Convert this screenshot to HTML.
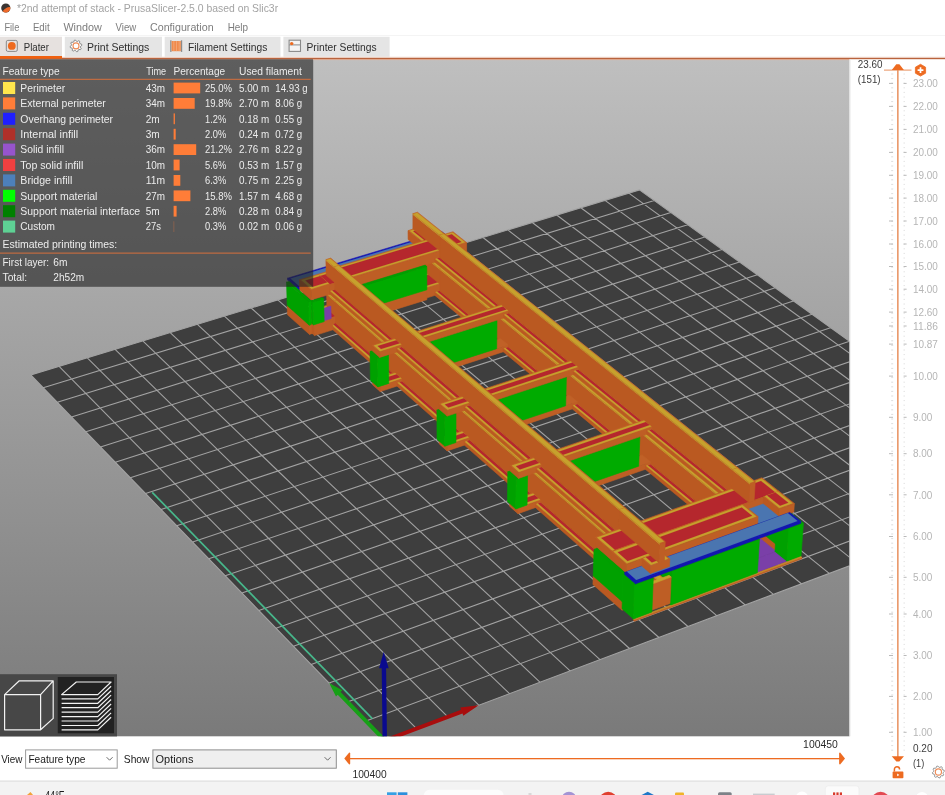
<!DOCTYPE html>
<html lang="en"><head><meta charset="utf-8"><title>PrusaSlicer</title>
<style>
html,body{margin:0;padding:0;background:#fff;}
body{width:945px;height:795px;overflow:hidden;position:relative;font-family:"Liberation Sans",sans-serif;}
#scene{position:absolute;left:0;top:0;width:945px;height:795px;display:block;font-family:"Liberation Sans",sans-serif;will-change:transform;-webkit-font-smoothing:antialiased;}
.t{position:absolute;white-space:nowrap;line-height:1;margin:0;padding:0;transform-origin:0 0;}
</style></head><body>
<svg id="scene" width="945" height="795" viewBox="0 0 945 795">
<defs><linearGradient id="bg" x1="0" y1="0" x2="0" y2="1"><stop offset="0" stop-color="#bfbfbf"/><stop offset="1" stop-color="#7a7a7a"/></linearGradient><clipPath id="cv"><rect x="0" y="59" width="849.5" height="677.3"/></clipPath></defs>
<rect x="0" y="59" width="849.5" height="677.3" fill="url(#bg)"/>
<g clip-path="url(#cv)">
<polygon points="384.8,740.6 1054.0,488.8 639.5,189.9 30.8,375.0" fill="#3e3e3e"/>
<path d="M384.8,740.6L30.8,375.0M416.5,728.7L59.1,366.4M447.8,716.9L87.3,357.8M478.8,705.2L115.1,349.3M509.5,693.7L142.8,340.9M539.9,682.2L170.2,332.6M570.1,670.9L197.4,324.3M600.0,659.6L224.4,316.1M629.5,648.5L251.2,308.0M658.9,637.5L277.8,299.9M687.9,626.5L304.2,291.9M716.7,615.7L330.3,283.9M745.2,605.0L356.3,276.0M773.4,594.4L382.0,268.2M801.4,583.8L407.5,260.4M829.2,573.4L432.9,252.7M856.7,563.0L458.0,245.1M883.9,552.8L483.0,237.5M910.9,542.6L507.8,229.9M937.7,532.6L532.3,222.5M964.2,522.6L556.7,215.0M990.5,512.7L580.9,207.7M1016.6,502.9L605.0,200.4M1042.4,493.2L628.8,193.1M384.8,740.6L1054.0,488.8M366.0,721.1L1032.2,473.1M347.4,701.9L1010.7,457.6M329.1,683.0L989.6,442.4M311.1,664.4L968.7,427.3M293.4,646.2L948.2,412.5M276.0,628.2L927.9,397.9M258.8,610.4L907.9,383.5M241.9,593.0L888.1,369.2M225.2,575.8L868.7,355.2M208.8,558.8L849.5,341.3M192.6,542.1L830.5,327.7M176.7,525.7L811.9,314.2M161.0,509.5L793.4,300.9M145.6,493.5L775.2,287.8M130.3,477.7L757.3,274.8M115.3,462.2L739.5,262.1M100.5,446.9L722.0,249.4M85.9,431.8L704.8,237.0M71.5,417.0L687.7,224.7M57.3,402.3L670.9,212.5M43.2,387.8L654.3,200.5M384.8,740.6L1054.0,488.8L639.5,189.9L30.8,375.0Z" fill="none" stroke="#a2a2a2" stroke-width="1.1"/>
<line x1="152.2" y1="492.3" x2="372.3" y2="718.7" stroke="#47b78b" stroke-width="1.7"/>
<polygon points="386.3,739.2 340.6,692.0 342.3,690.3 329.1,683.0 336.0,696.4 337.7,694.8 383.4,741.9" fill="#16a016"/>
<polygon points="385.5,742.4 462.5,713.5 463.3,715.7 478.8,705.2 460.2,707.5 461.1,709.7 384.1,738.7" fill="#a80d0d"/>
<polygon points="387.0,740.5 386.1,668.2 388.7,668.2 383.7,651.7 379.1,668.3 381.7,668.3 382.6,740.6" fill="#0a0a8e"/>
<polygon points="421.5,283.3 408.3,272.4 408.3,263.6 421.4,274.5" fill="#ba5921" stroke="#ba5921" stroke-width="0.6" stroke-linejoin="round"/>
<polygon points="421.5,283.3 438.4,278.1 438.4,269.2 421.4,274.5" fill="#be5e25" stroke="#be5e25" stroke-width="0.6" stroke-linejoin="round"/>
<polygon points="421.4,274.5 438.4,269.2 425.2,258.5 408.3,263.6" fill="#c06127" stroke="#c06127" stroke-width="0.6" stroke-linejoin="round"/>
<polygon points="422.3,274.2 437.5,269.5 424.8,259.2 409.7,263.8" fill="#c6a12d" stroke="#c6a12d" stroke-width="0.15" stroke-linejoin="round"/>
<polygon points="424.6,273.5 435.2,270.2 423.9,261.1 413.4,264.3" fill="#b5272d" stroke="#b5272d" stroke-width="0.15" stroke-linejoin="round"/>
<polygon points="340.4,324.8 327.3,313.3 327.1,303.4 340.2,314.8" fill="#ba5921" stroke="#ba5921" stroke-width="0.6" stroke-linejoin="round"/>
<polygon points="340.4,324.8 466.5,285.6 466.5,275.7 340.2,314.8" fill="#be5e25" stroke="#be5e25" stroke-width="0.6" stroke-linejoin="round"/>
<polygon points="340.2,314.8 466.5,275.7 452.9,264.8 327.1,303.4" fill="#c06127" stroke="#c06127" stroke-width="0.6" stroke-linejoin="round"/>
<polygon points="339.7,314.3 465.0,275.6 452.6,265.5 327.7,303.9" fill="#c6a12d" stroke="#c6a12d" stroke-width="0.15" stroke-linejoin="round"/>
<polygon points="338.3,313.1 461.3,275.1 451.7,267.4 329.0,305.1" fill="#b5272d" stroke="#b5272d" stroke-width="0.15" stroke-linejoin="round"/>
<polygon points="439.8,284.0 413.1,262.2 413.1,247.6 439.8,269.4" fill="#ba5921" stroke="#ba5921" stroke-width="0.6" stroke-linejoin="round"/>
<polygon points="439.8,284.0 444.4,282.6 444.4,267.9 439.8,269.4" fill="#be5e25" stroke="#be5e25" stroke-width="0.6" stroke-linejoin="round"/>
<polygon points="439.8,269.4 413.1,247.6 413.0,246.8 439.8,268.6" fill="#c6a12d" stroke="#c6a12d" stroke-width="0.6" stroke-linejoin="round"/>
<polygon points="439.8,269.4 444.4,267.9 444.4,267.1 439.8,268.6" fill="#be5e25" stroke="#be5e25" stroke-width="0.6" stroke-linejoin="round"/>
<polygon points="439.8,268.6 444.4,267.1 417.7,245.4 413.0,246.8" fill="#c06127" stroke="#c06127" stroke-width="0.6" stroke-linejoin="round"/>
<polygon points="439.8,268.6 443.8,267.3 417.4,246.0 413.4,247.2" fill="#c6a12d" stroke="#c6a12d" stroke-width="0.15" stroke-linejoin="round"/>
<polygon points="505.2,342.4 444.4,292.4 444.4,289.3 505.2,339.2" fill="#ba5921" stroke="#ba5921" stroke-width="0.6" stroke-linejoin="round"/>
<polygon points="505.2,342.4 510.1,340.8 510.2,337.6 505.2,339.2" fill="#be5e25" stroke="#be5e25" stroke-width="0.6" stroke-linejoin="round"/>
<polygon points="505.2,339.2 510.2,337.6 449.3,287.8 444.4,289.3" fill="#c06127" stroke="#c06127" stroke-width="0.6" stroke-linejoin="round"/>
<polygon points="505.2,339.2 509.6,337.8 448.8,288.0 444.4,289.3" fill="#c6a12d" stroke="#c6a12d" stroke-width="0.15" stroke-linejoin="round"/>
<polygon points="505.2,339.2 507.8,338.4 447.0,288.5 444.4,289.3" fill="#b5272d" stroke="#b5272d" stroke-width="0.15" stroke-linejoin="round"/>
<polygon points="298.3,289.4 287.6,280.1 287.6,278.2 298.2,287.5" fill="#1414b4" stroke="#1414b4" stroke-width="0.6" stroke-linejoin="round"/>
<polygon points="298.3,289.4 453.0,242.4 453.0,240.6 298.2,287.5" fill="#1414b4" stroke="#1414b4" stroke-width="0.6" stroke-linejoin="round"/>
<polygon points="298.2,287.5 453.0,240.6 441.9,231.7 287.6,278.2" fill="#1414b4" stroke="#1414b4" stroke-width="0.6" stroke-linejoin="round"/>
<polygon points="300.1,286.9 451.2,241.1 441.2,233.1 290.5,278.6" fill="#4a75b0" stroke="#4a75b0" stroke-width="0.15" stroke-linejoin="round"/>
<polygon points="421.3,250.2 408.1,239.5 408.0,230.6 421.3,241.2" fill="#ba5921" stroke="#ba5921" stroke-width="0.6" stroke-linejoin="round"/>
<polygon points="421.3,250.2 438.3,245.0 438.3,236.1 421.3,241.2" fill="#be5e25" stroke="#be5e25" stroke-width="0.6" stroke-linejoin="round"/>
<polygon points="421.3,241.2 438.3,236.1 425.0,225.5 408.0,230.6" fill="#c06127" stroke="#c06127" stroke-width="0.6" stroke-linejoin="round"/>
<polygon points="422.2,241.0 437.4,236.4 424.7,226.2 409.5,230.7" fill="#c6a12d" stroke="#c6a12d" stroke-width="0.15" stroke-linejoin="round"/>
<polygon points="424.5,240.3 435.1,237.1 423.8,228.0 413.2,231.2" fill="#b5272d" stroke="#b5272d" stroke-width="0.15" stroke-linejoin="round"/>
<polygon points="349.7,323.7 348.1,322.4 347.9,312.4 349.5,313.7" fill="#ba5921" stroke="#ba5921" stroke-width="0.6" stroke-linejoin="round"/>
<polygon points="349.7,323.7 426.9,299.7 426.9,289.8 349.5,313.7" fill="#be5e25" stroke="#be5e25" stroke-width="0.6" stroke-linejoin="round"/>
<polygon points="339.8,291.3 326.6,280.0 326.4,269.9 339.6,281.2" fill="#ba5921" stroke="#ba5921" stroke-width="0.6" stroke-linejoin="round"/>
<polygon points="339.8,291.3 466.6,252.5 466.6,242.5 339.6,281.2" fill="#be5e25" stroke="#be5e25" stroke-width="0.6" stroke-linejoin="round"/>
<polygon points="339.6,281.2 466.6,242.5 453.0,231.7 326.4,269.9" fill="#c06127" stroke="#c06127" stroke-width="0.6" stroke-linejoin="round"/>
<polygon points="339.0,280.7 465.2,242.3 452.6,232.4 326.9,270.4" fill="#c6a12d" stroke="#c6a12d" stroke-width="0.15" stroke-linejoin="round"/>
<polygon points="337.6,279.5 461.4,241.9 451.8,234.2 328.3,271.5" fill="#b5272d" stroke="#b5272d" stroke-width="0.15" stroke-linejoin="round"/>
<polygon points="439.7,250.7 412.9,229.1 412.9,214.4 439.7,235.9" fill="#ba5921" stroke="#ba5921" stroke-width="0.6" stroke-linejoin="round"/>
<polygon points="439.7,250.7 444.4,249.3 444.4,234.5 439.7,235.9" fill="#be5e25" stroke="#be5e25" stroke-width="0.6" stroke-linejoin="round"/>
<polygon points="439.7,235.9 412.9,214.4 412.8,213.6 439.7,235.1" fill="#c6a12d" stroke="#c6a12d" stroke-width="0.6" stroke-linejoin="round"/>
<polygon points="439.7,235.9 444.4,234.5 444.4,233.7 439.7,235.1" fill="#be5e25" stroke="#be5e25" stroke-width="0.6" stroke-linejoin="round"/>
<polygon points="439.7,235.1 444.4,233.7 417.5,212.2 412.8,213.6" fill="#c06127" stroke="#c06127" stroke-width="0.6" stroke-linejoin="round"/>
<polygon points="439.7,235.1 443.8,233.9 417.2,212.7 413.2,213.9" fill="#c6a12d" stroke="#c6a12d" stroke-width="0.15" stroke-linejoin="round"/>
<polygon points="349.5,313.7 347.9,312.4 347.5,288.9 349.1,290.2" fill="#00a100" stroke="#00a100" stroke-width="0.6" stroke-linejoin="round"/>
<polygon points="349.5,313.7 426.9,289.8 426.8,266.5 349.1,290.2" fill="#00ab00" stroke="#00ab00" stroke-width="0.6" stroke-linejoin="round"/>
<polygon points="349.1,290.2 426.8,266.5 425.2,265.1 347.5,288.9" fill="#00a000" stroke="#00a000" stroke-width="0.6" stroke-linejoin="round"/>
<polygon points="505.5,308.7 444.4,259.3 444.4,256.1 505.6,305.5" fill="#ba5921" stroke="#ba5921" stroke-width="0.6" stroke-linejoin="round"/>
<polygon points="505.5,308.7 510.5,307.1 510.6,303.9 505.6,305.5" fill="#be5e25" stroke="#be5e25" stroke-width="0.6" stroke-linejoin="round"/>
<polygon points="505.6,305.5 510.6,303.9 449.3,254.6 444.4,256.1" fill="#c06127" stroke="#c06127" stroke-width="0.6" stroke-linejoin="round"/>
<polygon points="505.6,305.5 510.1,304.1 448.8,254.8 444.4,256.1" fill="#c6a12d" stroke="#c6a12d" stroke-width="0.15" stroke-linejoin="round"/>
<polygon points="505.6,305.5 508.2,304.6 447.0,255.3 444.4,256.1" fill="#b5272d" stroke="#b5272d" stroke-width="0.15" stroke-linejoin="round"/>
<polygon points="512.9,348.7 505.2,342.4 505.2,337.1 513.0,343.4" fill="#ba5921" stroke="#ba5921" stroke-width="0.6" stroke-linejoin="round"/>
<polygon points="512.9,348.7 525.7,344.6 525.8,339.3 513.0,343.4" fill="#be5e25" stroke="#be5e25" stroke-width="0.6" stroke-linejoin="round"/>
<polygon points="513.0,343.4 525.8,339.3 518.0,333.0 505.2,337.1" fill="#c06127" stroke="#c06127" stroke-width="0.6" stroke-linejoin="round"/>
<polygon points="512.4,342.9 524.3,339.1 517.7,333.8 505.8,337.6" fill="#c6a12d" stroke="#c6a12d" stroke-width="0.15" stroke-linejoin="round"/>
<polygon points="510.8,341.7 520.4,338.6 516.9,335.7 507.3,338.8" fill="#b5272d" stroke="#b5272d" stroke-width="0.15" stroke-linejoin="round"/>
<polygon points="330.6,327.8 319.1,317.7 318.8,307.7 330.4,317.8" fill="#ba5921" stroke="#ba5921" stroke-width="0.6" stroke-linejoin="round"/>
<polygon points="330.6,327.8 340.4,324.8 340.2,314.8 330.4,317.8" fill="#be5e25" stroke="#be5e25" stroke-width="0.6" stroke-linejoin="round"/>
<polygon points="330.4,317.8 340.2,314.8 328.7,304.7 318.8,307.7" fill="#c06127" stroke="#c06127" stroke-width="0.6" stroke-linejoin="round"/>
<polygon points="330.4,317.8 340.2,314.8 329.2,305.2 319.4,308.2" fill="#c6a12d" stroke="#c6a12d" stroke-width="0.15" stroke-linejoin="round"/>
<polygon points="330.4,317.8 340.2,314.8 330.6,306.4 320.8,309.4" fill="#b5272d" stroke="#b5272d" stroke-width="0.15" stroke-linejoin="round"/>
<polygon points="335.4,316.3 327.0,308.9 326.6,294.1 335.1,301.5" fill="#ba5921" stroke="#ba5921" stroke-width="0.6" stroke-linejoin="round"/>
<polygon points="335.4,316.3 340.2,314.8 339.9,300.0 335.1,301.5" fill="#be5e25" stroke="#be5e25" stroke-width="0.6" stroke-linejoin="round"/>
<polygon points="312.2,333.5 300.7,323.4 300.4,313.4 311.9,323.5" fill="#ba5921" stroke="#ba5921" stroke-width="0.6" stroke-linejoin="round"/>
<polygon points="312.2,333.5 330.6,327.8 330.4,317.8 311.9,323.5" fill="#be5e25" stroke="#be5e25" stroke-width="0.6" stroke-linejoin="round"/>
<polygon points="311.9,323.5 330.4,317.8 318.8,307.7 300.4,313.4" fill="#c06127" stroke="#c06127" stroke-width="0.6" stroke-linejoin="round"/>
<polygon points="312.4,322.7 329.8,317.3 319.4,308.3 302.1,313.6" fill="#c6a12d" stroke="#c6a12d" stroke-width="0.15" stroke-linejoin="round"/>
<polygon points="313.5,320.5 328.2,315.9 321.0,309.6 306.3,314.1" fill="#b5272d" stroke="#b5272d" stroke-width="0.15" stroke-linejoin="round"/>
<polygon points="309.5,334.4 287.5,314.8 287.2,305.6 309.3,325.2" fill="#ba5921" stroke="#ba5921" stroke-width="0.6" stroke-linejoin="round"/>
<polygon points="309.5,334.4 312.2,333.5 311.9,324.3 309.3,325.2" fill="#be5e25" stroke="#be5e25" stroke-width="0.6" stroke-linejoin="round"/>
<polygon points="335.1,301.5 326.6,294.1 326.6,293.3 335.1,300.7" fill="#c6a12d" stroke="#c6a12d" stroke-width="0.6" stroke-linejoin="round"/>
<polygon points="335.1,301.5 339.9,300.0 339.9,299.2 335.1,300.7" fill="#be5e25" stroke="#be5e25" stroke-width="0.6" stroke-linejoin="round"/>
<polygon points="335.1,300.7 339.9,299.2 331.4,291.9 326.6,293.3" fill="#c06127" stroke="#c06127" stroke-width="0.6" stroke-linejoin="round"/>
<polygon points="335.1,300.7 339.3,299.4 331.1,292.4 327.0,293.7" fill="#c6a12d" stroke="#c6a12d" stroke-width="0.15" stroke-linejoin="round"/>
<polygon points="299.8,290.7 298.3,289.4 298.2,287.5 299.8,288.8" fill="#1414b4" stroke="#1414b4" stroke-width="0.6" stroke-linejoin="round"/>
<polygon points="299.8,288.8 328.1,280.2 326.6,278.9 298.2,287.5" fill="#1414b4" stroke="#1414b4" stroke-width="0.6" stroke-linejoin="round"/>
<polygon points="301.6,288.3 328.1,280.2 326.6,278.9 300.1,286.9" fill="#4a75b0" stroke="#4a75b0" stroke-width="0.15" stroke-linejoin="round"/>
<polygon points="513.3,315.0 505.5,308.7 505.6,303.3 513.4,309.6" fill="#ba5921" stroke="#ba5921" stroke-width="0.6" stroke-linejoin="round"/>
<polygon points="513.3,315.0 526.2,310.9 526.3,305.5 513.4,309.6" fill="#be5e25" stroke="#be5e25" stroke-width="0.6" stroke-linejoin="round"/>
<polygon points="513.4,309.6 526.3,305.5 518.5,299.3 505.6,303.3" fill="#c06127" stroke="#c06127" stroke-width="0.6" stroke-linejoin="round"/>
<polygon points="512.8,309.1 524.8,305.3 518.1,300.0 506.2,303.8" fill="#c6a12d" stroke="#c6a12d" stroke-width="0.15" stroke-linejoin="round"/>
<polygon points="511.3,307.9 520.9,304.9 517.3,302.0 507.7,305.0" fill="#b5272d" stroke="#b5272d" stroke-width="0.15" stroke-linejoin="round"/>
<polygon points="309.3,325.2 287.2,305.6 286.5,282.2 308.7,301.6" fill="#00a100" stroke="#00a100" stroke-width="0.6" stroke-linejoin="round"/>
<polygon points="309.3,325.2 311.9,324.3 311.3,300.8 308.7,301.6" fill="#00ab00" stroke="#00ab00" stroke-width="0.6" stroke-linejoin="round"/>
<polygon points="308.7,301.6 311.3,300.8 289.2,281.4 286.5,282.2" fill="#00a000" stroke="#00a000" stroke-width="0.6" stroke-linejoin="round"/>
<polygon points="329.9,294.3 318.3,284.3 318.0,274.2 329.6,284.2" fill="#ba5921" stroke="#ba5921" stroke-width="0.6" stroke-linejoin="round"/>
<polygon points="329.9,294.3 339.8,291.3 339.6,281.2 329.6,284.2" fill="#be5e25" stroke="#be5e25" stroke-width="0.6" stroke-linejoin="round"/>
<polygon points="329.6,284.2 339.6,281.2 327.9,271.2 318.0,274.2" fill="#c06127" stroke="#c06127" stroke-width="0.6" stroke-linejoin="round"/>
<polygon points="329.6,284.2 339.6,281.2 328.5,271.7 318.6,274.7" fill="#c6a12d" stroke="#c6a12d" stroke-width="0.15" stroke-linejoin="round"/>
<polygon points="329.6,284.2 339.6,281.2 329.9,272.9 320.0,275.9" fill="#b5272d" stroke="#b5272d" stroke-width="0.15" stroke-linejoin="round"/>
<polygon points="334.7,282.6 326.2,275.3 325.9,260.4 334.4,267.7" fill="#ba5921" stroke="#ba5921" stroke-width="0.6" stroke-linejoin="round"/>
<polygon points="334.7,282.6 339.6,281.2 339.3,266.2 334.4,267.7" fill="#be5e25" stroke="#be5e25" stroke-width="0.6" stroke-linejoin="round"/>
<polygon points="311.3,300.0 299.8,289.9 299.5,279.8 311.1,289.8" fill="#ba5921" stroke="#ba5921" stroke-width="0.6" stroke-linejoin="round"/>
<polygon points="311.3,300.0 329.9,294.3 329.6,284.2 311.1,289.8" fill="#be5e25" stroke="#be5e25" stroke-width="0.6" stroke-linejoin="round"/>
<polygon points="311.1,289.8 329.6,284.2 318.0,274.2 299.5,279.8" fill="#c06127" stroke="#c06127" stroke-width="0.6" stroke-linejoin="round"/>
<polygon points="311.5,289.0 329.0,283.6 318.6,274.7 301.2,280.0" fill="#c6a12d" stroke="#c6a12d" stroke-width="0.15" stroke-linejoin="round"/>
<polygon points="312.7,286.8 327.5,282.3 320.2,276.1 305.4,280.5" fill="#b5272d" stroke="#b5272d" stroke-width="0.15" stroke-linejoin="round"/>
<polygon points="399.5,376.3 340.4,324.8 340.4,321.6 399.5,373.1" fill="#ba5921" stroke="#ba5921" stroke-width="0.6" stroke-linejoin="round"/>
<polygon points="399.5,376.3 404.6,374.7 404.6,371.5 399.5,373.1" fill="#be5e25" stroke="#be5e25" stroke-width="0.6" stroke-linejoin="round"/>
<polygon points="399.5,373.1 404.6,371.5 345.4,320.0 340.4,321.6" fill="#c06127" stroke="#c06127" stroke-width="0.6" stroke-linejoin="round"/>
<polygon points="399.5,373.1 404.1,371.7 344.9,320.2 340.4,321.6" fill="#c6a12d" stroke="#c6a12d" stroke-width="0.15" stroke-linejoin="round"/>
<polygon points="399.5,373.1 402.2,372.3 343.0,320.8 340.4,321.6" fill="#b5272d" stroke="#b5272d" stroke-width="0.15" stroke-linejoin="round"/>
<polygon points="574.0,398.9 512.9,348.7 512.9,345.5 574.1,395.7" fill="#ba5921" stroke="#ba5921" stroke-width="0.6" stroke-linejoin="round"/>
<polygon points="574.0,398.9 579.0,397.2 579.1,394.0 574.1,395.7" fill="#be5e25" stroke="#be5e25" stroke-width="0.6" stroke-linejoin="round"/>
<polygon points="574.1,395.7 579.1,394.0 517.9,343.9 512.9,345.5" fill="#c06127" stroke="#c06127" stroke-width="0.6" stroke-linejoin="round"/>
<polygon points="574.1,395.7 578.6,394.2 517.4,344.1 512.9,345.5" fill="#c6a12d" stroke="#c6a12d" stroke-width="0.15" stroke-linejoin="round"/>
<polygon points="574.1,395.7 576.7,394.8 515.5,344.7 512.9,345.5" fill="#b5272d" stroke="#b5272d" stroke-width="0.15" stroke-linejoin="round"/>
<polygon points="334.4,267.7 325.9,260.4 325.9,259.6 334.4,266.9" fill="#c6a12d" stroke="#c6a12d" stroke-width="0.6" stroke-linejoin="round"/>
<polygon points="334.4,267.7 339.3,266.2 339.3,265.4 334.4,266.9" fill="#be5e25" stroke="#be5e25" stroke-width="0.6" stroke-linejoin="round"/>
<polygon points="334.4,266.9 339.3,265.4 330.7,258.1 325.9,259.6" fill="#c06127" stroke="#c06127" stroke-width="0.6" stroke-linejoin="round"/>
<polygon points="334.4,266.9 338.6,265.6 330.4,258.7 326.2,259.9" fill="#c6a12d" stroke="#c6a12d" stroke-width="0.15" stroke-linejoin="round"/>
<polygon points="399.2,342.3 339.8,291.3 339.7,288.1 399.2,339.1" fill="#ba5921" stroke="#ba5921" stroke-width="0.6" stroke-linejoin="round"/>
<polygon points="399.2,342.3 404.4,340.7 404.4,337.4 399.2,339.1" fill="#be5e25" stroke="#be5e25" stroke-width="0.6" stroke-linejoin="round"/>
<polygon points="399.2,339.1 404.4,337.4 344.8,286.5 339.7,288.1" fill="#c06127" stroke="#c06127" stroke-width="0.6" stroke-linejoin="round"/>
<polygon points="399.2,339.1 403.8,337.6 344.2,286.7 339.7,288.1" fill="#c6a12d" stroke="#c6a12d" stroke-width="0.15" stroke-linejoin="round"/>
<polygon points="399.2,339.1 401.9,338.2 342.4,287.3 339.7,288.1" fill="#b5272d" stroke="#b5272d" stroke-width="0.15" stroke-linejoin="round"/>
<polygon points="574.8,364.7 513.3,315.0 513.4,311.7 574.9,361.4" fill="#ba5921" stroke="#ba5921" stroke-width="0.6" stroke-linejoin="round"/>
<polygon points="574.8,364.7 579.9,363.0 580.0,359.7 574.9,361.4" fill="#be5e25" stroke="#be5e25" stroke-width="0.6" stroke-linejoin="round"/>
<polygon points="574.9,361.4 580.0,359.7 518.4,310.2 513.4,311.7" fill="#c06127" stroke="#c06127" stroke-width="0.6" stroke-linejoin="round"/>
<polygon points="574.9,361.4 579.5,359.9 517.8,310.3 513.4,311.7" fill="#c6a12d" stroke="#c6a12d" stroke-width="0.15" stroke-linejoin="round"/>
<polygon points="574.9,361.4 577.6,360.5 516.0,310.9 513.4,311.7" fill="#b5272d" stroke="#b5272d" stroke-width="0.15" stroke-linejoin="round"/>
<polygon points="582.1,405.6 574.0,398.9 574.1,393.5 582.3,400.2" fill="#ba5921" stroke="#ba5921" stroke-width="0.6" stroke-linejoin="round"/>
<polygon points="582.1,405.6 595.1,401.3 595.3,395.9 582.3,400.2" fill="#be5e25" stroke="#be5e25" stroke-width="0.6" stroke-linejoin="round"/>
<polygon points="582.3,400.2 595.3,395.9 587.1,389.2 574.1,393.5" fill="#c06127" stroke="#c06127" stroke-width="0.6" stroke-linejoin="round"/>
<polygon points="581.7,399.7 593.7,395.7 586.8,390.0 574.7,394.1" fill="#c6a12d" stroke="#c6a12d" stroke-width="0.15" stroke-linejoin="round"/>
<polygon points="580.1,398.4 589.8,395.2 586.0,392.1 576.3,395.4" fill="#b5272d" stroke="#b5272d" stroke-width="0.15" stroke-linejoin="round"/>
<polygon points="583.0,371.3 574.8,364.7 575.0,359.2 583.2,365.9" fill="#ba5921" stroke="#ba5921" stroke-width="0.6" stroke-linejoin="round"/>
<polygon points="583.0,371.3 596.1,367.0 596.3,361.5 583.2,365.9" fill="#be5e25" stroke="#be5e25" stroke-width="0.6" stroke-linejoin="round"/>
<polygon points="583.2,365.9 596.3,361.5 588.0,354.9 575.0,359.2" fill="#c06127" stroke="#c06127" stroke-width="0.6" stroke-linejoin="round"/>
<polygon points="582.6,365.3 594.7,361.3 587.7,355.7 575.6,359.7" fill="#c6a12d" stroke="#c6a12d" stroke-width="0.15" stroke-linejoin="round"/>
<polygon points="580.9,364.0 590.7,360.8 586.9,357.8 577.2,361.0" fill="#b5272d" stroke="#b5272d" stroke-width="0.15" stroke-linejoin="round"/>
<polygon points="646.7,458.7 582.1,405.6 582.2,402.4 646.8,455.4" fill="#ba5921" stroke="#ba5921" stroke-width="0.6" stroke-linejoin="round"/>
<polygon points="646.7,458.7 651.8,456.9 652.0,453.6 646.8,455.4" fill="#be5e25" stroke="#be5e25" stroke-width="0.6" stroke-linejoin="round"/>
<polygon points="646.8,455.4 652.0,453.6 587.3,400.7 582.2,402.4" fill="#c06127" stroke="#c06127" stroke-width="0.6" stroke-linejoin="round"/>
<polygon points="646.8,455.4 651.4,453.8 586.7,400.9 582.2,402.4" fill="#c6a12d" stroke="#c6a12d" stroke-width="0.15" stroke-linejoin="round"/>
<polygon points="646.8,455.4 649.5,454.5 584.9,401.5 582.2,402.4" fill="#b5272d" stroke="#b5272d" stroke-width="0.15" stroke-linejoin="round"/>
<polygon points="648.1,423.9 583.0,371.3 583.1,368.0 648.2,420.5" fill="#ba5921" stroke="#ba5921" stroke-width="0.6" stroke-linejoin="round"/>
<polygon points="648.1,423.9 653.3,422.1 653.4,418.8 648.2,420.5" fill="#be5e25" stroke="#be5e25" stroke-width="0.6" stroke-linejoin="round"/>
<polygon points="648.2,420.5 653.4,418.8 588.2,366.4 583.1,368.0" fill="#c06127" stroke="#c06127" stroke-width="0.6" stroke-linejoin="round"/>
<polygon points="648.2,420.5 652.8,419.0 587.7,366.5 583.1,368.0" fill="#c6a12d" stroke="#c6a12d" stroke-width="0.15" stroke-linejoin="round"/>
<polygon points="648.2,420.5 650.9,419.6 585.8,367.2 583.1,368.0" fill="#b5272d" stroke="#b5272d" stroke-width="0.15" stroke-linejoin="round"/>
<polygon points="655.4,465.8 646.7,458.7 646.9,453.2 655.6,460.3" fill="#ba5921" stroke="#ba5921" stroke-width="0.6" stroke-linejoin="round"/>
<polygon points="655.4,465.8 668.6,461.2 668.8,455.7 655.6,460.3" fill="#be5e25" stroke="#be5e25" stroke-width="0.6" stroke-linejoin="round"/>
<polygon points="655.6,460.3 668.8,455.7 660.2,448.7 646.9,453.2" fill="#c06127" stroke="#c06127" stroke-width="0.6" stroke-linejoin="round"/>
<polygon points="654.9,459.8 667.2,455.5 659.9,449.5 647.6,453.8" fill="#c6a12d" stroke="#c6a12d" stroke-width="0.15" stroke-linejoin="round"/>
<polygon points="653.2,458.4 663.1,455.0 659.1,451.7 649.3,455.2" fill="#b5272d" stroke="#b5272d" stroke-width="0.15" stroke-linejoin="round"/>
<polygon points="656.8,430.9 648.1,423.9 648.3,418.3 657.0,425.4" fill="#ba5921" stroke="#ba5921" stroke-width="0.6" stroke-linejoin="round"/>
<polygon points="656.8,430.9 670.1,426.3 670.3,420.8 657.0,425.4" fill="#be5e25" stroke="#be5e25" stroke-width="0.6" stroke-linejoin="round"/>
<polygon points="657.0,425.4 670.3,420.8 661.6,413.8 648.3,418.3" fill="#c06127" stroke="#c06127" stroke-width="0.6" stroke-linejoin="round"/>
<polygon points="656.4,424.8 668.7,420.6 661.3,414.7 649.0,418.9" fill="#c6a12d" stroke="#c6a12d" stroke-width="0.15" stroke-linejoin="round"/>
<polygon points="654.6,423.4 664.6,420.0 660.6,416.9 650.7,420.2" fill="#b5272d" stroke="#b5272d" stroke-width="0.15" stroke-linejoin="round"/>
<polygon points="734.3,530.7 655.4,465.8 655.5,462.5 734.5,527.3" fill="#ba5921" stroke="#ba5921" stroke-width="0.6" stroke-linejoin="round"/>
<polygon points="734.3,530.7 739.5,528.8 739.7,525.4 734.5,527.3" fill="#be5e25" stroke="#be5e25" stroke-width="0.6" stroke-linejoin="round"/>
<polygon points="734.5,527.3 739.7,525.4 660.6,460.7 655.5,462.5" fill="#c06127" stroke="#c06127" stroke-width="0.6" stroke-linejoin="round"/>
<polygon points="734.5,527.3 739.2,525.6 660.1,460.9 655.5,462.5" fill="#c6a12d" stroke="#c6a12d" stroke-width="0.15" stroke-linejoin="round"/>
<polygon points="734.5,527.3 737.2,526.3 658.2,461.6 655.5,462.5" fill="#b5272d" stroke="#b5272d" stroke-width="0.15" stroke-linejoin="round"/>
<polygon points="729.3,532.5 439.8,293.9 439.8,290.8 729.5,529.1" fill="#ba5921" stroke="#ba5921" stroke-width="0.6" stroke-linejoin="round"/>
<polygon points="729.3,532.5 734.3,530.7 734.5,527.3 729.5,529.1" fill="#be5e25" stroke="#be5e25" stroke-width="0.6" stroke-linejoin="round"/>
<polygon points="495.5,345.5 434.9,295.4 434.9,292.3 495.5,342.3" fill="#ba5921" stroke="#ba5921" stroke-width="0.6" stroke-linejoin="round"/>
<polygon points="495.5,345.5 500.5,343.9 500.5,340.7 495.5,342.3" fill="#be5e25" stroke="#be5e25" stroke-width="0.6" stroke-linejoin="round"/>
<polygon points="495.5,342.3 500.5,340.7 439.8,290.8 434.9,292.3" fill="#c06127" stroke="#c06127" stroke-width="0.6" stroke-linejoin="round"/>
<polygon points="496.0,342.1 500.5,340.7 439.8,290.8 435.4,292.1" fill="#c6a12d" stroke="#c6a12d" stroke-width="0.15" stroke-linejoin="round"/>
<polygon points="497.9,341.5 500.5,340.7 439.8,290.8 437.2,291.6" fill="#b5272d" stroke="#b5272d" stroke-width="0.15" stroke-linejoin="round"/>
<polygon points="729.5,529.1 439.8,290.8 439.8,269.4 730.8,506.2" fill="#ba5921" stroke="#ba5921" stroke-width="0.6" stroke-linejoin="round"/>
<polygon points="729.5,529.1 734.5,527.3 735.8,504.4 730.8,506.2" fill="#be5e25" stroke="#be5e25" stroke-width="0.6" stroke-linejoin="round"/>
<polygon points="407.0,382.9 399.5,376.3 399.5,371.0 407.0,377.5" fill="#ba5921" stroke="#ba5921" stroke-width="0.6" stroke-linejoin="round"/>
<polygon points="407.0,382.9 508.2,350.2 508.2,344.9 407.0,377.5" fill="#be5e25" stroke="#be5e25" stroke-width="0.6" stroke-linejoin="round"/>
<polygon points="407.0,377.5 508.2,344.9 500.5,338.6 399.5,371.0" fill="#c06127" stroke="#c06127" stroke-width="0.6" stroke-linejoin="round"/>
<polygon points="564.1,402.2 503.2,351.8 503.2,348.7 564.2,399.0" fill="#ba5921" stroke="#ba5921" stroke-width="0.6" stroke-linejoin="round"/>
<polygon points="564.1,402.2 569.2,400.5 569.3,397.3 564.2,399.0" fill="#be5e25" stroke="#be5e25" stroke-width="0.6" stroke-linejoin="round"/>
<polygon points="564.2,399.0 569.3,397.3 508.2,347.1 503.2,348.7" fill="#c06127" stroke="#c06127" stroke-width="0.6" stroke-linejoin="round"/>
<polygon points="564.7,398.8 569.3,397.3 508.2,347.1 503.8,348.5" fill="#c6a12d" stroke="#c6a12d" stroke-width="0.15" stroke-linejoin="round"/>
<polygon points="566.6,398.2 569.3,397.3 508.2,347.1 505.6,347.9" fill="#b5272d" stroke="#b5272d" stroke-width="0.15" stroke-linejoin="round"/>
<polygon points="414.8,375.0 407.3,368.5 407.1,339.8 414.7,346.3" fill="#00a100" stroke="#00a100" stroke-width="0.6" stroke-linejoin="round"/>
<polygon points="414.8,375.0 496.7,348.7 497.0,320.2 414.7,346.3" fill="#00ab00" stroke="#00ab00" stroke-width="0.6" stroke-linejoin="round"/>
<polygon points="414.7,346.3 497.0,320.2 489.2,313.8 407.1,339.8" fill="#00a000" stroke="#00a000" stroke-width="0.6" stroke-linejoin="round"/>
<polygon points="730.8,506.2 439.8,269.4 439.8,268.6 730.9,505.4" fill="#c6a12d" stroke="#c6a12d" stroke-width="0.6" stroke-linejoin="round"/>
<polygon points="730.8,506.2 735.8,504.4 735.8,503.6 730.9,505.4" fill="#be5e25" stroke="#be5e25" stroke-width="0.6" stroke-linejoin="round"/>
<polygon points="730.9,505.4 735.8,503.6 444.4,267.1 439.8,268.6" fill="#c06127" stroke="#c06127" stroke-width="0.6" stroke-linejoin="round"/>
<polygon points="730.9,505.4 735.1,503.8 443.8,267.3 439.8,268.6" fill="#c6a12d" stroke="#c6a12d" stroke-width="0.15" stroke-linejoin="round"/>
<polygon points="466.5,434.8 407.0,382.9 407.0,379.7 466.5,431.5" fill="#ba5921" stroke="#ba5921" stroke-width="0.6" stroke-linejoin="round"/>
<polygon points="466.5,434.8 471.7,433.0 471.7,429.8 466.5,431.5" fill="#be5e25" stroke="#be5e25" stroke-width="0.6" stroke-linejoin="round"/>
<polygon points="466.5,431.5 471.7,429.8 412.1,378.0 407.0,379.7" fill="#c06127" stroke="#c06127" stroke-width="0.6" stroke-linejoin="round"/>
<polygon points="466.5,431.5 471.2,430.0 411.6,378.2 407.0,379.7" fill="#c6a12d" stroke="#c6a12d" stroke-width="0.15" stroke-linejoin="round"/>
<polygon points="466.5,431.5 469.3,430.6 409.7,378.8 407.0,379.7" fill="#b5272d" stroke="#b5272d" stroke-width="0.15" stroke-linejoin="round"/>
<polygon points="474.5,441.7 466.5,434.8 466.5,429.4 474.5,436.3" fill="#ba5921" stroke="#ba5921" stroke-width="0.6" stroke-linejoin="round"/>
<polygon points="474.5,441.7 577.3,407.2 577.5,401.8 474.5,436.3" fill="#be5e25" stroke="#be5e25" stroke-width="0.6" stroke-linejoin="round"/>
<polygon points="474.5,436.3 577.5,401.8 569.3,395.1 466.5,429.4" fill="#c06127" stroke="#c06127" stroke-width="0.6" stroke-linejoin="round"/>
<polygon points="636.7,462.2 572.3,408.9 572.4,405.7 636.8,458.9" fill="#ba5921" stroke="#ba5921" stroke-width="0.6" stroke-linejoin="round"/>
<polygon points="636.7,462.2 641.9,460.4 642.0,457.1 636.8,458.9" fill="#be5e25" stroke="#be5e25" stroke-width="0.6" stroke-linejoin="round"/>
<polygon points="636.8,458.9 642.0,457.1 577.4,404.0 572.4,405.7" fill="#c06127" stroke="#c06127" stroke-width="0.6" stroke-linejoin="round"/>
<polygon points="637.4,458.7 642.0,457.1 577.4,404.0 572.9,405.5" fill="#c6a12d" stroke="#c6a12d" stroke-width="0.15" stroke-linejoin="round"/>
<polygon points="639.3,458.0 642.0,457.1 577.4,404.0 574.8,404.9" fill="#b5272d" stroke="#b5272d" stroke-width="0.15" stroke-linejoin="round"/>
<polygon points="482.5,433.6 474.5,426.7 474.7,397.6 482.7,404.4" fill="#00a100" stroke="#00a100" stroke-width="0.6" stroke-linejoin="round"/>
<polygon points="482.5,433.6 565.7,405.8 566.4,376.8 482.7,404.4" fill="#00ab00" stroke="#00ab00" stroke-width="0.6" stroke-linejoin="round"/>
<polygon points="482.7,404.4 566.4,376.8 558.2,370.1 474.7,397.6" fill="#00a000" stroke="#00a000" stroke-width="0.6" stroke-linejoin="round"/>
<polygon points="537.4,496.6 474.5,441.7 474.5,438.5 537.5,493.3" fill="#ba5921" stroke="#ba5921" stroke-width="0.6" stroke-linejoin="round"/>
<polygon points="537.4,496.6 542.7,494.8 542.8,491.5 537.5,493.3" fill="#be5e25" stroke="#be5e25" stroke-width="0.6" stroke-linejoin="round"/>
<polygon points="537.5,493.3 542.8,491.5 479.7,436.7 474.5,438.5" fill="#c06127" stroke="#c06127" stroke-width="0.6" stroke-linejoin="round"/>
<polygon points="537.5,493.3 542.2,491.7 479.2,436.9 474.5,438.5" fill="#c6a12d" stroke="#c6a12d" stroke-width="0.15" stroke-linejoin="round"/>
<polygon points="537.5,493.3 540.2,492.4 477.2,437.5 474.5,438.5" fill="#b5272d" stroke="#b5272d" stroke-width="0.15" stroke-linejoin="round"/>
<polygon points="545.8,504.0 537.4,496.6 537.5,491.1 545.9,498.5" fill="#ba5921" stroke="#ba5921" stroke-width="0.6" stroke-linejoin="round"/>
<polygon points="545.8,504.0 650.5,467.5 650.7,462.0 545.9,498.5" fill="#be5e25" stroke="#be5e25" stroke-width="0.6" stroke-linejoin="round"/>
<polygon points="545.9,498.5 650.7,462.0 642.1,454.9 537.5,491.1" fill="#c06127" stroke="#c06127" stroke-width="0.6" stroke-linejoin="round"/>
<polygon points="724.1,534.4 645.3,469.3 645.5,466.0 724.3,531.0" fill="#ba5921" stroke="#ba5921" stroke-width="0.6" stroke-linejoin="round"/>
<polygon points="724.1,534.4 729.3,532.5 729.5,529.1 724.3,531.0" fill="#be5e25" stroke="#be5e25" stroke-width="0.6" stroke-linejoin="round"/>
<polygon points="724.3,531.0 729.5,529.1 650.6,464.2 645.5,466.0" fill="#c06127" stroke="#c06127" stroke-width="0.6" stroke-linejoin="round"/>
<polygon points="724.8,530.8 729.5,529.1 650.6,464.2 646.0,465.8" fill="#c6a12d" stroke="#c6a12d" stroke-width="0.15" stroke-linejoin="round"/>
<polygon points="726.8,530.1 729.5,529.1 650.6,464.2 647.9,465.2" fill="#b5272d" stroke="#b5272d" stroke-width="0.15" stroke-linejoin="round"/>
<polygon points="554.0,495.6 545.6,488.3 546.2,458.7 554.7,465.9" fill="#00a100" stroke="#00a100" stroke-width="0.6" stroke-linejoin="round"/>
<polygon points="554.0,495.6 638.7,466.2 639.9,436.7 554.7,465.9" fill="#00ab00" stroke="#00ab00" stroke-width="0.6" stroke-linejoin="round"/>
<polygon points="554.7,465.9 639.9,436.7 631.2,429.6 546.2,458.7" fill="#00a000" stroke="#00a000" stroke-width="0.6" stroke-linejoin="round"/>
<polygon points="736.3,495.2 656.8,430.9 656.9,427.6 736.5,491.8" fill="#ba5921" stroke="#ba5921" stroke-width="0.6" stroke-linejoin="round"/>
<polygon points="736.3,495.2 741.6,493.3 741.8,489.9 736.5,491.8" fill="#be5e25" stroke="#be5e25" stroke-width="0.6" stroke-linejoin="round"/>
<polygon points="736.5,491.8 741.8,489.9 662.1,425.8 656.9,427.6" fill="#c06127" stroke="#c06127" stroke-width="0.6" stroke-linejoin="round"/>
<polygon points="736.5,491.8 741.2,490.1 661.6,426.0 656.9,427.6" fill="#c6a12d" stroke="#c6a12d" stroke-width="0.15" stroke-linejoin="round"/>
<polygon points="736.5,491.8 739.3,490.8 659.6,426.6 656.9,427.6" fill="#b5272d" stroke="#b5272d" stroke-width="0.15" stroke-linejoin="round"/>
<polygon points="731.3,496.9 439.8,260.7 439.8,257.5 731.5,493.6" fill="#ba5921" stroke="#ba5921" stroke-width="0.6" stroke-linejoin="round"/>
<polygon points="731.3,496.9 736.3,495.2 736.5,491.8 731.5,493.6" fill="#be5e25" stroke="#be5e25" stroke-width="0.6" stroke-linejoin="round"/>
<polygon points="495.8,311.8 434.8,262.2 434.8,259.0 495.8,308.5" fill="#ba5921" stroke="#ba5921" stroke-width="0.6" stroke-linejoin="round"/>
<polygon points="495.8,311.8 500.8,310.2 500.8,307.0 495.8,308.5" fill="#be5e25" stroke="#be5e25" stroke-width="0.6" stroke-linejoin="round"/>
<polygon points="495.8,308.5 500.8,307.0 439.8,257.5 434.8,259.0" fill="#c06127" stroke="#c06127" stroke-width="0.6" stroke-linejoin="round"/>
<polygon points="496.4,308.4 500.8,307.0 439.8,257.5 435.3,258.9" fill="#c6a12d" stroke="#c6a12d" stroke-width="0.15" stroke-linejoin="round"/>
<polygon points="498.2,307.8 500.8,307.0 439.8,257.5 437.2,258.3" fill="#b5272d" stroke="#b5272d" stroke-width="0.15" stroke-linejoin="round"/>
<polygon points="731.5,493.6 439.8,257.5 439.7,235.9 732.8,470.3" fill="#ba5921" stroke="#ba5921" stroke-width="0.6" stroke-linejoin="round"/>
<polygon points="731.5,493.6 736.5,491.8 737.8,468.6 732.8,470.3" fill="#be5e25" stroke="#be5e25" stroke-width="0.6" stroke-linejoin="round"/>
<polygon points="406.8,348.8 399.2,342.3 399.2,336.9 406.7,343.4" fill="#ba5921" stroke="#ba5921" stroke-width="0.6" stroke-linejoin="round"/>
<polygon points="406.8,348.8 508.6,316.5 508.6,311.1 406.7,343.4" fill="#be5e25" stroke="#be5e25" stroke-width="0.6" stroke-linejoin="round"/>
<polygon points="406.7,343.4 508.6,311.1 500.9,304.8 399.2,336.9" fill="#c06127" stroke="#c06127" stroke-width="0.6" stroke-linejoin="round"/>
<polygon points="406.2,342.9 508.1,310.6 501.5,305.3 399.7,337.4" fill="#c6a12d" stroke="#c6a12d" stroke-width="0.15" stroke-linejoin="round"/>
<polygon points="404.7,341.6 506.5,309.4 503.0,306.5 401.2,338.7" fill="#b5272d" stroke="#b5272d" stroke-width="0.15" stroke-linejoin="round"/>
<polygon points="564.9,367.9 503.6,318.1 503.6,314.8 565.0,364.7" fill="#ba5921" stroke="#ba5921" stroke-width="0.6" stroke-linejoin="round"/>
<polygon points="564.9,367.9 570.0,366.2 570.1,363.0 565.0,364.7" fill="#be5e25" stroke="#be5e25" stroke-width="0.6" stroke-linejoin="round"/>
<polygon points="565.0,364.7 570.1,363.0 508.6,313.3 503.6,314.8" fill="#c06127" stroke="#c06127" stroke-width="0.6" stroke-linejoin="round"/>
<polygon points="565.5,364.5 570.1,363.0 508.6,313.3 504.1,314.7" fill="#c6a12d" stroke="#c6a12d" stroke-width="0.15" stroke-linejoin="round"/>
<polygon points="567.4,363.9 570.1,363.0 508.6,313.3 506.0,314.1" fill="#b5272d" stroke="#b5272d" stroke-width="0.15" stroke-linejoin="round"/>
<polygon points="732.8,470.3 439.7,235.9 439.7,235.1 732.9,469.5" fill="#c6a12d" stroke="#c6a12d" stroke-width="0.6" stroke-linejoin="round"/>
<polygon points="732.8,470.3 737.8,468.6 737.9,467.7 732.9,469.5" fill="#be5e25" stroke="#be5e25" stroke-width="0.6" stroke-linejoin="round"/>
<polygon points="732.9,469.5 737.9,467.7 444.4,233.7 439.7,235.1" fill="#c06127" stroke="#c06127" stroke-width="0.6" stroke-linejoin="round"/>
<polygon points="732.9,469.5 737.2,468.0 443.8,233.9 439.7,235.1" fill="#c6a12d" stroke="#c6a12d" stroke-width="0.15" stroke-linejoin="round"/>
<polygon points="466.7,400.2 406.8,348.8 406.8,345.6 466.7,396.9" fill="#ba5921" stroke="#ba5921" stroke-width="0.6" stroke-linejoin="round"/>
<polygon points="466.7,400.2 471.9,398.5 471.9,395.2 466.7,396.9" fill="#be5e25" stroke="#be5e25" stroke-width="0.6" stroke-linejoin="round"/>
<polygon points="466.7,396.9 471.9,395.2 411.9,343.9 406.8,345.6" fill="#c06127" stroke="#c06127" stroke-width="0.6" stroke-linejoin="round"/>
<polygon points="466.7,396.9 471.4,395.4 411.4,344.1 406.8,345.6" fill="#c6a12d" stroke="#c6a12d" stroke-width="0.15" stroke-linejoin="round"/>
<polygon points="466.7,396.9 469.4,396.0 409.5,344.7 406.8,345.6" fill="#b5272d" stroke="#b5272d" stroke-width="0.15" stroke-linejoin="round"/>
<polygon points="474.7,407.1 466.7,400.2 466.7,394.7 474.7,401.6" fill="#ba5921" stroke="#ba5921" stroke-width="0.6" stroke-linejoin="round"/>
<polygon points="474.7,407.1 578.2,372.9 578.4,367.4 474.7,401.6" fill="#be5e25" stroke="#be5e25" stroke-width="0.6" stroke-linejoin="round"/>
<polygon points="474.7,401.6 578.4,367.4 570.1,360.8 466.7,394.7" fill="#c06127" stroke="#c06127" stroke-width="0.6" stroke-linejoin="round"/>
<polygon points="474.1,401.0 577.7,366.9 570.8,361.3 467.3,395.2" fill="#c6a12d" stroke="#c6a12d" stroke-width="0.15" stroke-linejoin="round"/>
<polygon points="472.5,399.7 576.1,365.6 572.4,362.6 468.8,396.6" fill="#b5272d" stroke="#b5272d" stroke-width="0.15" stroke-linejoin="round"/>
<polygon points="638.0,427.3 573.1,374.6 573.2,371.3 638.1,424.0" fill="#ba5921" stroke="#ba5921" stroke-width="0.6" stroke-linejoin="round"/>
<polygon points="638.0,427.3 643.2,425.5 643.3,422.2 638.1,424.0" fill="#be5e25" stroke="#be5e25" stroke-width="0.6" stroke-linejoin="round"/>
<polygon points="638.1,424.0 643.3,422.2 578.3,369.6 573.2,371.3" fill="#c06127" stroke="#c06127" stroke-width="0.6" stroke-linejoin="round"/>
<polygon points="638.7,423.8 643.3,422.2 578.3,369.6 573.7,371.1" fill="#c6a12d" stroke="#c6a12d" stroke-width="0.15" stroke-linejoin="round"/>
<polygon points="640.6,423.1 643.3,422.2 578.3,369.6 575.6,370.5" fill="#b5272d" stroke="#b5272d" stroke-width="0.15" stroke-linejoin="round"/>
<polygon points="538.0,461.5 474.7,407.1 474.7,403.8 538.1,458.1" fill="#ba5921" stroke="#ba5921" stroke-width="0.6" stroke-linejoin="round"/>
<polygon points="538.0,461.5 543.4,459.6 543.4,456.3 538.1,458.1" fill="#be5e25" stroke="#be5e25" stroke-width="0.6" stroke-linejoin="round"/>
<polygon points="538.1,458.1 543.4,456.3 479.9,402.0 474.7,403.8" fill="#c06127" stroke="#c06127" stroke-width="0.6" stroke-linejoin="round"/>
<polygon points="538.1,458.1 542.9,456.5 479.4,402.2 474.7,403.8" fill="#c6a12d" stroke="#c6a12d" stroke-width="0.15" stroke-linejoin="round"/>
<polygon points="538.1,458.1 540.9,457.2 477.4,402.8 474.7,403.8" fill="#b5272d" stroke="#b5272d" stroke-width="0.15" stroke-linejoin="round"/>
<polygon points="546.5,468.7 538.0,461.5 538.1,455.9 546.6,463.2" fill="#ba5921" stroke="#ba5921" stroke-width="0.6" stroke-linejoin="round"/>
<polygon points="546.5,468.7 651.9,432.6 652.1,427.0 546.6,463.2" fill="#be5e25" stroke="#be5e25" stroke-width="0.6" stroke-linejoin="round"/>
<polygon points="546.6,463.2 652.1,427.0 643.4,420.0 538.1,455.9" fill="#c06127" stroke="#c06127" stroke-width="0.6" stroke-linejoin="round"/>
<polygon points="546.0,462.6 651.4,426.5 644.1,420.5 538.8,456.4" fill="#c6a12d" stroke="#c6a12d" stroke-width="0.15" stroke-linejoin="round"/>
<polygon points="544.3,461.2 649.7,425.1 645.8,421.9 540.4,457.9" fill="#b5272d" stroke="#b5272d" stroke-width="0.15" stroke-linejoin="round"/>
<polygon points="726.1,498.8 646.7,434.4 646.8,431.0 726.2,495.5" fill="#ba5921" stroke="#ba5921" stroke-width="0.6" stroke-linejoin="round"/>
<polygon points="726.1,498.8 731.3,496.9 731.5,493.6 726.2,495.5" fill="#be5e25" stroke="#be5e25" stroke-width="0.6" stroke-linejoin="round"/>
<polygon points="726.2,495.5 731.5,493.6 652.0,429.3 646.8,431.0" fill="#c06127" stroke="#c06127" stroke-width="0.6" stroke-linejoin="round"/>
<polygon points="726.8,495.3 731.5,493.6 652.0,429.3 647.4,430.8" fill="#c6a12d" stroke="#c6a12d" stroke-width="0.15" stroke-linejoin="round"/>
<polygon points="728.7,494.6 731.5,493.6 652.0,429.3 649.3,430.2" fill="#b5272d" stroke="#b5272d" stroke-width="0.15" stroke-linejoin="round"/>
<polygon points="622.8,571.2 545.8,504.0 545.9,500.7 622.9,567.8" fill="#ba5921" stroke="#ba5921" stroke-width="0.6" stroke-linejoin="round"/>
<polygon points="622.8,571.2 628.2,569.2 628.3,565.9 622.9,567.8" fill="#be5e25" stroke="#be5e25" stroke-width="0.6" stroke-linejoin="round"/>
<polygon points="622.9,567.8 628.3,565.9 551.2,498.8 545.9,500.7" fill="#c06127" stroke="#c06127" stroke-width="0.6" stroke-linejoin="round"/>
<polygon points="622.9,567.8 627.8,566.1 550.6,499.0 545.9,500.7" fill="#c6a12d" stroke="#c6a12d" stroke-width="0.15" stroke-linejoin="round"/>
<polygon points="622.9,567.8 625.8,566.8 548.7,499.7 545.9,500.7" fill="#b5272d" stroke="#b5272d" stroke-width="0.15" stroke-linejoin="round"/>
<polygon points="617.7,573.1 335.7,326.2 335.6,323.1 617.8,569.7" fill="#ba5921" stroke="#ba5921" stroke-width="0.6" stroke-linejoin="round"/>
<polygon points="617.7,573.1 622.8,571.2 622.9,567.8 617.8,569.7" fill="#be5e25" stroke="#be5e25" stroke-width="0.6" stroke-linejoin="round"/>
<polygon points="389.5,379.5 330.6,327.8 330.5,324.7 389.5,376.3" fill="#ba5921" stroke="#ba5921" stroke-width="0.6" stroke-linejoin="round"/>
<polygon points="389.5,379.5 394.7,377.9 394.6,374.7 389.5,376.3" fill="#be5e25" stroke="#be5e25" stroke-width="0.6" stroke-linejoin="round"/>
<polygon points="389.5,376.3 394.6,374.7 335.6,323.1 330.5,324.7" fill="#c06127" stroke="#c06127" stroke-width="0.6" stroke-linejoin="round"/>
<polygon points="390.0,376.2 394.6,374.7 335.6,323.1 331.1,324.5" fill="#c6a12d" stroke="#c6a12d" stroke-width="0.15" stroke-linejoin="round"/>
<polygon points="391.9,375.6 394.6,374.7 335.6,323.1 332.9,323.9" fill="#b5272d" stroke="#b5272d" stroke-width="0.15" stroke-linejoin="round"/>
<polygon points="314.5,335.6 312.2,333.5 311.9,323.5 314.2,325.6" fill="#ba5921" stroke="#ba5921" stroke-width="0.6" stroke-linejoin="round"/>
<polygon points="314.5,335.6 332.9,329.8 332.7,319.9 314.2,325.6" fill="#be5e25" stroke="#be5e25" stroke-width="0.6" stroke-linejoin="round"/>
<polygon points="323.4,320.9 331.2,318.5 330.9,306.1 323.1,308.5" fill="#7a3fa8" stroke="#7a3fa8" stroke-width="0.6" stroke-linejoin="round"/>
<polygon points="313.5,324.9 311.9,323.5 311.3,300.8 312.9,302.1" fill="#00a100" stroke="#00a100" stroke-width="0.6" stroke-linejoin="round"/>
<polygon points="313.5,324.9 324.2,321.6 323.7,298.8 312.9,302.1" fill="#00ab00" stroke="#00ab00" stroke-width="0.6" stroke-linejoin="round"/>
<polygon points="312.9,302.1 323.7,298.8 322.1,297.5 311.3,300.8" fill="#00a000" stroke="#00a000" stroke-width="0.6" stroke-linejoin="round"/>
<polygon points="617.8,569.7 335.6,323.1 335.1,301.5 618.6,546.6" fill="#ba5921" stroke="#ba5921" stroke-width="0.6" stroke-linejoin="round"/>
<polygon points="617.8,569.7 622.9,567.8 623.8,544.7 618.6,546.6" fill="#be5e25" stroke="#be5e25" stroke-width="0.6" stroke-linejoin="round"/>
<polygon points="380.2,391.6 372.7,384.9 372.6,379.6 380.1,386.2" fill="#ba5921" stroke="#ba5921" stroke-width="0.6" stroke-linejoin="round"/>
<polygon points="380.2,391.6 402.2,384.4 402.1,379.1 380.1,386.2" fill="#be5e25" stroke="#be5e25" stroke-width="0.6" stroke-linejoin="round"/>
<polygon points="380.1,386.2 402.1,379.1 394.6,372.6 372.6,379.6" fill="#c06127" stroke="#c06127" stroke-width="0.6" stroke-linejoin="round"/>
<polygon points="380.5,385.4 401.5,378.6 395.2,373.0 374.1,379.8" fill="#c6a12d" stroke="#c6a12d" stroke-width="0.15" stroke-linejoin="round"/>
<polygon points="381.5,383.3 400.1,377.3 396.6,374.3 378.1,380.3" fill="#b5272d" stroke="#b5272d" stroke-width="0.15" stroke-linejoin="round"/>
<polygon points="377.9,386.9 370.4,380.3 370.0,351.5 377.5,358.1" fill="#00a100" stroke="#00a100" stroke-width="0.6" stroke-linejoin="round"/>
<polygon points="377.9,386.9 388.8,383.4 388.5,354.6 377.5,358.1" fill="#00ab00" stroke="#00ab00" stroke-width="0.6" stroke-linejoin="round"/>
<polygon points="377.5,358.1 388.5,354.6 381.0,348.1 370.0,351.5" fill="#00a000" stroke="#00a000" stroke-width="0.6" stroke-linejoin="round"/>
<polygon points="456.3,438.2 397.0,386.1 397.0,382.9 456.3,434.9" fill="#ba5921" stroke="#ba5921" stroke-width="0.6" stroke-linejoin="round"/>
<polygon points="456.3,438.2 461.6,436.4 461.6,433.2 456.3,434.9" fill="#be5e25" stroke="#be5e25" stroke-width="0.6" stroke-linejoin="round"/>
<polygon points="456.3,434.9 461.6,433.2 402.1,381.2 397.0,382.9" fill="#c06127" stroke="#c06127" stroke-width="0.6" stroke-linejoin="round"/>
<polygon points="456.9,434.7 461.6,433.2 402.1,381.2 397.5,382.7" fill="#c6a12d" stroke="#c6a12d" stroke-width="0.15" stroke-linejoin="round"/>
<polygon points="458.8,434.1 461.6,433.2 402.1,381.2 399.4,382.1" fill="#b5272d" stroke="#b5272d" stroke-width="0.15" stroke-linejoin="round"/>
<polygon points="447.1,450.9 439.2,443.9 439.2,438.5 447.1,445.4" fill="#ba5921" stroke="#ba5921" stroke-width="0.6" stroke-linejoin="round"/>
<polygon points="447.1,450.9 469.5,443.4 469.5,437.9 447.1,445.4" fill="#be5e25" stroke="#be5e25" stroke-width="0.6" stroke-linejoin="round"/>
<polygon points="447.1,445.4 469.5,437.9 461.6,431.0 439.2,438.5" fill="#c06127" stroke="#c06127" stroke-width="0.6" stroke-linejoin="round"/>
<polygon points="447.5,444.6 468.9,437.4 462.2,431.5 440.8,438.7" fill="#c6a12d" stroke="#c6a12d" stroke-width="0.15" stroke-linejoin="round"/>
<polygon points="448.4,442.4 467.4,436.1 463.7,432.9 444.8,439.2" fill="#b5272d" stroke="#b5272d" stroke-width="0.15" stroke-linejoin="round"/>
<polygon points="618.6,546.6 335.1,301.5 335.1,300.7 618.6,545.7" fill="#c6a12d" stroke="#c6a12d" stroke-width="0.6" stroke-linejoin="round"/>
<polygon points="618.6,546.6 623.8,544.7 623.8,543.9 618.6,545.7" fill="#be5e25" stroke="#be5e25" stroke-width="0.6" stroke-linejoin="round"/>
<polygon points="618.6,545.7 623.8,543.9 339.9,299.2 335.1,300.7" fill="#c06127" stroke="#c06127" stroke-width="0.6" stroke-linejoin="round"/>
<polygon points="618.6,545.7 623.1,544.1 339.3,299.4 335.1,300.7" fill="#c6a12d" stroke="#c6a12d" stroke-width="0.15" stroke-linejoin="round"/>
<polygon points="444.9,446.2 437.0,439.2 436.9,410.0 444.9,416.9" fill="#00a100" stroke="#00a100" stroke-width="0.6" stroke-linejoin="round"/>
<polygon points="444.9,446.2 456.0,442.5 456.0,413.2 444.9,416.9" fill="#00ab00" stroke="#00ab00" stroke-width="0.6" stroke-linejoin="round"/>
<polygon points="444.9,416.9 456.0,413.2 448.1,406.3 436.9,410.0" fill="#00a000" stroke="#00a000" stroke-width="0.6" stroke-linejoin="round"/>
<polygon points="527.0,500.2 464.3,445.1 464.3,441.9 527.1,496.9" fill="#ba5921" stroke="#ba5921" stroke-width="0.6" stroke-linejoin="round"/>
<polygon points="527.0,500.2 532.4,498.4 532.4,495.1 527.1,496.9" fill="#be5e25" stroke="#be5e25" stroke-width="0.6" stroke-linejoin="round"/>
<polygon points="527.1,496.9 532.4,495.1 469.5,440.1 464.3,441.9" fill="#c06127" stroke="#c06127" stroke-width="0.6" stroke-linejoin="round"/>
<polygon points="527.7,496.7 532.4,495.1 469.5,440.1 464.8,441.7" fill="#c6a12d" stroke="#c6a12d" stroke-width="0.15" stroke-linejoin="round"/>
<polygon points="529.6,496.1 532.4,495.1 469.5,440.1 466.8,441.0" fill="#b5272d" stroke="#b5272d" stroke-width="0.15" stroke-linejoin="round"/>
<polygon points="518.0,513.7 509.6,506.3 509.7,500.8 518.0,508.2" fill="#ba5921" stroke="#ba5921" stroke-width="0.6" stroke-linejoin="round"/>
<polygon points="518.0,513.7 540.8,505.7 540.9,500.2 518.0,508.2" fill="#be5e25" stroke="#be5e25" stroke-width="0.6" stroke-linejoin="round"/>
<polygon points="518.0,508.2 540.9,500.2 532.5,492.9 509.7,500.8" fill="#c06127" stroke="#c06127" stroke-width="0.6" stroke-linejoin="round"/>
<polygon points="518.4,507.3 540.2,499.7 533.1,493.4 511.3,501.0" fill="#c6a12d" stroke="#c6a12d" stroke-width="0.15" stroke-linejoin="round"/>
<polygon points="519.3,504.9 538.6,498.2 534.7,494.9 515.5,501.5" fill="#b5272d" stroke="#b5272d" stroke-width="0.15" stroke-linejoin="round"/>
<polygon points="515.8,509.0 507.4,501.5 507.8,471.8 516.2,479.1" fill="#00a100" stroke="#00a100" stroke-width="0.6" stroke-linejoin="round"/>
<polygon points="515.8,509.0 527.1,505.0 527.6,475.2 516.2,479.1" fill="#00ab00" stroke="#00ab00" stroke-width="0.6" stroke-linejoin="round"/>
<polygon points="516.2,479.1 527.6,475.2 519.1,467.9 507.8,471.8" fill="#00a000" stroke="#00a000" stroke-width="0.6" stroke-linejoin="round"/>
<polygon points="612.2,575.0 535.4,507.6 535.5,504.3 612.4,571.7" fill="#ba5921" stroke="#ba5921" stroke-width="0.6" stroke-linejoin="round"/>
<polygon points="612.2,575.0 617.7,573.1 617.8,569.7 612.4,571.7" fill="#be5e25" stroke="#be5e25" stroke-width="0.6" stroke-linejoin="round"/>
<polygon points="612.4,571.7 617.8,569.7 540.8,502.4 535.5,504.3" fill="#c06127" stroke="#c06127" stroke-width="0.6" stroke-linejoin="round"/>
<polygon points="612.9,571.5 617.8,569.7 540.8,502.4 536.1,504.1" fill="#c6a12d" stroke="#c6a12d" stroke-width="0.15" stroke-linejoin="round"/>
<polygon points="614.9,570.7 617.8,569.7 540.8,502.4 538.0,503.4" fill="#b5272d" stroke="#b5272d" stroke-width="0.15" stroke-linejoin="round"/>
<polygon points="610.1,596.0 593.9,581.7 594.1,573.3 610.3,587.6" fill="#ba5921" stroke="#ba5921" stroke-width="0.6" stroke-linejoin="round"/>
<polygon points="610.1,596.0 776.0,535.2 776.5,526.8 610.3,587.6" fill="#be5e25" stroke="#be5e25" stroke-width="0.6" stroke-linejoin="round"/>
<polygon points="610.3,587.6 776.5,526.8 759.7,513.3 594.1,573.3" fill="#c06127" stroke="#c06127" stroke-width="0.6" stroke-linejoin="round"/>
<polygon points="611.4,587.2 775.6,527.2 759.5,514.2 595.8,573.5" fill="#c6a12d" stroke="#c6a12d" stroke-width="0.15" stroke-linejoin="round"/>
<polygon points="614.0,586.3 773.1,528.1 758.8,516.5 600.2,574.1" fill="#b5272d" stroke="#b5272d" stroke-width="0.15" stroke-linejoin="round"/>
<polygon points="776.2,553.2 760.9,540.7 761.4,532.4 776.7,544.8" fill="#ba5921" stroke="#ba5921" stroke-width="0.6" stroke-linejoin="round"/>
<polygon points="776.2,553.2 791.3,547.6 791.9,539.2 776.7,544.8" fill="#be5e25" stroke="#be5e25" stroke-width="0.6" stroke-linejoin="round"/>
<polygon points="776.7,544.8 791.9,539.2 776.5,526.8 761.4,532.4" fill="#c06127" stroke="#c06127" stroke-width="0.6" stroke-linejoin="round"/>
<polygon points="777.0,543.9 790.2,539.0 775.6,527.2 762.4,532.0" fill="#c6a12d" stroke="#c6a12d" stroke-width="0.15" stroke-linejoin="round"/>
<polygon points="777.6,541.5 785.9,538.4 773.1,528.1 764.9,531.1" fill="#b5272d" stroke="#b5272d" stroke-width="0.15" stroke-linejoin="round"/>
<polygon points="756.7,534.1 742.0,522.1 743.5,495.7 758.4,507.7" fill="#00a100" stroke="#00a100" stroke-width="0.6" stroke-linejoin="round"/>
<polygon points="756.7,534.1 774.3,527.6 776.1,501.3 758.4,507.7" fill="#00ab00" stroke="#00ab00" stroke-width="0.6" stroke-linejoin="round"/>
<polygon points="758.4,507.7 776.1,501.3 761.2,489.4 743.5,495.7" fill="#00a000" stroke="#00a000" stroke-width="0.6" stroke-linejoin="round"/>
<polygon points="746.9,538.1 729.8,524.1 730.8,506.2 748.0,520.2" fill="#ba5921" stroke="#ba5921" stroke-width="0.6" stroke-linejoin="round"/>
<polygon points="746.9,538.1 751.9,536.3 753.0,518.4 748.0,520.2" fill="#be5e25" stroke="#be5e25" stroke-width="0.6" stroke-linejoin="round"/>
<polygon points="755.5,559.2 776.3,551.5 761.0,539.1 740.3,546.6" fill="#7a3fa8" stroke="#7a3fa8" stroke-width="0.6" stroke-linejoin="round"/>
<polygon points="776.7,544.8 761.4,532.4 763.1,506.0 778.5,518.4" fill="#00a100" stroke="#00a100" stroke-width="0.6" stroke-linejoin="round"/>
<polygon points="776.7,544.8 789.7,540.1 791.5,513.6 778.5,518.4" fill="#00ab00" stroke="#00ab00" stroke-width="0.6" stroke-linejoin="round"/>
<polygon points="778.5,518.4 791.5,513.6 776.1,501.3 763.1,506.0" fill="#00a000" stroke="#00a000" stroke-width="0.6" stroke-linejoin="round"/>
<polygon points="748.0,520.2 730.8,506.2 730.9,505.4 748.0,519.3" fill="#c6a12d" stroke="#c6a12d" stroke-width="0.6" stroke-linejoin="round"/>
<polygon points="748.0,520.2 753.0,518.4 753.0,517.5 748.0,519.3" fill="#be5e25" stroke="#be5e25" stroke-width="0.6" stroke-linejoin="round"/>
<polygon points="748.0,519.3 753.0,517.5 735.8,503.6 730.9,505.4" fill="#c06127" stroke="#c06127" stroke-width="0.6" stroke-linejoin="round"/>
<polygon points="747.5,518.9 751.8,517.4 735.1,503.8 730.9,505.4" fill="#c6a12d" stroke="#c6a12d" stroke-width="0.15" stroke-linejoin="round"/>
<polygon points="786.6,561.9 774.9,552.3 777.1,518.9 788.9,528.4" fill="#00a100" stroke="#00a100" stroke-width="0.6" stroke-linejoin="round"/>
<polygon points="786.6,561.9 801.0,556.6 803.4,523.1 788.9,528.4" fill="#00ab00" stroke="#00ab00" stroke-width="0.6" stroke-linejoin="round"/>
<polygon points="788.9,528.4 803.4,523.1 791.5,513.6 777.1,518.9" fill="#00a000" stroke="#00a000" stroke-width="0.6" stroke-linejoin="round"/>
<polygon points="624.1,535.3 546.5,468.7 546.6,465.4 624.2,531.9" fill="#ba5921" stroke="#ba5921" stroke-width="0.6" stroke-linejoin="round"/>
<polygon points="624.1,535.3 629.5,533.4 629.7,530.0 624.2,531.9" fill="#be5e25" stroke="#be5e25" stroke-width="0.6" stroke-linejoin="round"/>
<polygon points="624.2,531.9 629.7,530.0 551.9,463.6 546.6,465.4" fill="#c06127" stroke="#c06127" stroke-width="0.6" stroke-linejoin="round"/>
<polygon points="624.2,531.9 629.1,530.2 551.4,463.7 546.6,465.4" fill="#c6a12d" stroke="#c6a12d" stroke-width="0.15" stroke-linejoin="round"/>
<polygon points="624.2,531.9 627.1,530.9 549.4,464.4 546.6,465.4" fill="#b5272d" stroke="#b5272d" stroke-width="0.15" stroke-linejoin="round"/>
<polygon points="618.9,537.2 335.0,292.7 334.9,289.5 619.0,533.8" fill="#ba5921" stroke="#ba5921" stroke-width="0.6" stroke-linejoin="round"/>
<polygon points="618.9,537.2 624.1,535.3 624.2,531.9 619.0,533.8" fill="#be5e25" stroke="#be5e25" stroke-width="0.6" stroke-linejoin="round"/>
<polygon points="389.2,345.5 329.9,294.3 329.8,291.1 389.1,342.2" fill="#ba5921" stroke="#ba5921" stroke-width="0.6" stroke-linejoin="round"/>
<polygon points="389.2,345.5 394.3,343.8 394.3,340.6 389.1,342.2" fill="#be5e25" stroke="#be5e25" stroke-width="0.6" stroke-linejoin="round"/>
<polygon points="389.1,342.2 394.3,340.6 334.9,289.5 329.8,291.1" fill="#c06127" stroke="#c06127" stroke-width="0.6" stroke-linejoin="round"/>
<polygon points="389.7,342.1 394.3,340.6 334.9,289.5 330.3,290.9" fill="#c6a12d" stroke="#c6a12d" stroke-width="0.15" stroke-linejoin="round"/>
<polygon points="391.6,341.5 394.3,340.6 334.9,289.5 332.2,290.4" fill="#b5272d" stroke="#b5272d" stroke-width="0.15" stroke-linejoin="round"/>
<polygon points="619.0,533.8 334.9,289.5 334.4,267.7 619.8,510.3" fill="#ba5921" stroke="#ba5921" stroke-width="0.6" stroke-linejoin="round"/>
<polygon points="619.0,533.8 624.2,531.9 625.0,508.5 619.8,510.3" fill="#be5e25" stroke="#be5e25" stroke-width="0.6" stroke-linejoin="round"/>
<polygon points="379.7,357.4 372.2,350.8 372.1,345.4 379.7,352.0" fill="#ba5921" stroke="#ba5921" stroke-width="0.6" stroke-linejoin="round"/>
<polygon points="379.7,357.4 401.9,350.4 401.8,344.9 379.7,352.0" fill="#be5e25" stroke="#be5e25" stroke-width="0.6" stroke-linejoin="round"/>
<polygon points="379.7,352.0 401.8,344.9 394.3,338.4 372.1,345.4" fill="#c06127" stroke="#c06127" stroke-width="0.6" stroke-linejoin="round"/>
<polygon points="380.1,351.2 401.3,344.4 394.8,338.9 373.7,345.6" fill="#c6a12d" stroke="#c6a12d" stroke-width="0.15" stroke-linejoin="round"/>
<polygon points="381.0,349.1 399.8,343.2 396.3,340.2 377.6,346.1" fill="#b5272d" stroke="#b5272d" stroke-width="0.15" stroke-linejoin="round"/>
<polygon points="456.4,403.6 396.7,352.0 396.7,348.8 456.4,400.3" fill="#ba5921" stroke="#ba5921" stroke-width="0.6" stroke-linejoin="round"/>
<polygon points="456.4,403.6 461.7,401.8 461.7,398.5 456.4,400.3" fill="#be5e25" stroke="#be5e25" stroke-width="0.6" stroke-linejoin="round"/>
<polygon points="456.4,400.3 461.7,398.5 401.9,347.1 396.7,348.8" fill="#c06127" stroke="#c06127" stroke-width="0.6" stroke-linejoin="round"/>
<polygon points="457.0,400.1 461.7,398.5 401.9,347.1 397.2,348.6" fill="#c6a12d" stroke="#c6a12d" stroke-width="0.15" stroke-linejoin="round"/>
<polygon points="458.9,399.4 461.7,398.5 401.9,347.1 399.1,348.0" fill="#b5272d" stroke="#b5272d" stroke-width="0.15" stroke-linejoin="round"/>
<polygon points="447.1,416.1 439.2,409.2 439.2,403.7 447.1,410.6" fill="#ba5921" stroke="#ba5921" stroke-width="0.6" stroke-linejoin="round"/>
<polygon points="447.1,416.1 469.7,408.7 469.7,403.2 447.1,410.6" fill="#be5e25" stroke="#be5e25" stroke-width="0.6" stroke-linejoin="round"/>
<polygon points="447.1,410.6 469.7,403.2 461.7,396.3 439.2,403.7" fill="#c06127" stroke="#c06127" stroke-width="0.6" stroke-linejoin="round"/>
<polygon points="447.5,409.8 469.1,402.7 462.3,396.9 440.7,403.9" fill="#c6a12d" stroke="#c6a12d" stroke-width="0.15" stroke-linejoin="round"/>
<polygon points="448.4,407.6 467.5,401.3 463.9,398.2 444.8,404.4" fill="#b5272d" stroke="#b5272d" stroke-width="0.15" stroke-linejoin="round"/>
<polygon points="619.8,510.3 334.4,267.7 334.4,266.9 619.9,509.5" fill="#c6a12d" stroke="#c6a12d" stroke-width="0.6" stroke-linejoin="round"/>
<polygon points="619.8,510.3 625.0,508.5 625.1,507.6 619.9,509.5" fill="#be5e25" stroke="#be5e25" stroke-width="0.6" stroke-linejoin="round"/>
<polygon points="619.9,509.5 625.1,507.6 339.3,265.4 334.4,266.9" fill="#c06127" stroke="#c06127" stroke-width="0.6" stroke-linejoin="round"/>
<polygon points="619.9,509.5 624.3,507.9 338.6,265.6 334.4,266.9" fill="#c6a12d" stroke="#c6a12d" stroke-width="0.15" stroke-linejoin="round"/>
<polygon points="527.6,465.0 464.4,410.4 464.4,407.1 527.7,461.7" fill="#ba5921" stroke="#ba5921" stroke-width="0.6" stroke-linejoin="round"/>
<polygon points="527.6,465.0 533.0,463.2 533.0,459.8 527.7,461.7" fill="#be5e25" stroke="#be5e25" stroke-width="0.6" stroke-linejoin="round"/>
<polygon points="527.7,461.7 533.0,459.8 469.7,405.4 464.4,407.1" fill="#c06127" stroke="#c06127" stroke-width="0.6" stroke-linejoin="round"/>
<polygon points="528.2,461.5 533.0,459.8 469.7,405.4 465.0,407.0" fill="#c6a12d" stroke="#c6a12d" stroke-width="0.15" stroke-linejoin="round"/>
<polygon points="530.2,460.8 533.0,459.8 469.7,405.4 466.9,406.3" fill="#b5272d" stroke="#b5272d" stroke-width="0.15" stroke-linejoin="round"/>
<polygon points="518.5,478.4 510.1,471.0 510.1,465.4 518.6,472.8" fill="#ba5921" stroke="#ba5921" stroke-width="0.6" stroke-linejoin="round"/>
<polygon points="518.5,478.4 541.4,470.5 541.5,464.9 518.6,472.8" fill="#be5e25" stroke="#be5e25" stroke-width="0.6" stroke-linejoin="round"/>
<polygon points="518.6,472.8 541.5,464.9 533.1,457.6 510.1,465.4" fill="#c06127" stroke="#c06127" stroke-width="0.6" stroke-linejoin="round"/>
<polygon points="518.9,471.9 540.9,464.3 533.7,458.2 511.8,465.6" fill="#c6a12d" stroke="#c6a12d" stroke-width="0.15" stroke-linejoin="round"/>
<polygon points="519.8,469.5 539.2,462.9 535.4,459.6 516.0,466.2" fill="#b5272d" stroke="#b5272d" stroke-width="0.15" stroke-linejoin="round"/>
<polygon points="613.4,539.2 536.1,472.3 536.1,469.0 613.6,535.7" fill="#ba5921" stroke="#ba5921" stroke-width="0.6" stroke-linejoin="round"/>
<polygon points="613.4,539.2 618.9,537.2 619.0,533.8 613.6,535.7" fill="#be5e25" stroke="#be5e25" stroke-width="0.6" stroke-linejoin="round"/>
<polygon points="613.6,535.7 619.0,533.8 541.5,467.1 536.1,469.0" fill="#c06127" stroke="#c06127" stroke-width="0.6" stroke-linejoin="round"/>
<polygon points="614.1,535.5 619.0,533.8 541.5,467.1 536.7,468.8" fill="#c6a12d" stroke="#c6a12d" stroke-width="0.15" stroke-linejoin="round"/>
<polygon points="616.2,534.8 619.0,533.8 541.5,467.1 538.7,468.1" fill="#b5272d" stroke="#b5272d" stroke-width="0.15" stroke-linejoin="round"/>
<polygon points="624.9,609.2 610.1,596.0 610.3,587.6 625.2,600.7" fill="#ba5921" stroke="#ba5921" stroke-width="0.6" stroke-linejoin="round"/>
<polygon points="624.9,609.2 755.4,560.9 755.9,552.5 625.2,600.7" fill="#be5e25" stroke="#be5e25" stroke-width="0.6" stroke-linejoin="round"/>
<polygon points="625.2,600.7 755.9,552.5 740.7,539.9 610.3,587.6" fill="#c06127" stroke="#c06127" stroke-width="0.6" stroke-linejoin="round"/>
<polygon points="625.5,599.7 754.2,552.3 740.4,540.9 612.0,587.8" fill="#c6a12d" stroke="#c6a12d" stroke-width="0.15" stroke-linejoin="round"/>
<polygon points="626.3,597.1 749.9,551.7 739.7,543.3 616.4,588.4" fill="#b5272d" stroke="#b5272d" stroke-width="0.15" stroke-linejoin="round"/>
<polygon points="757.4,572.5 786.6,561.6 774.9,552.1 745.8,562.8" fill="#7a3fa8" stroke="#7a3fa8" stroke-width="0.6" stroke-linejoin="round"/>
<polygon points="659.8,587.9 630.5,562.5 631.5,535.9 661.0,561.2" fill="#00a100" stroke="#00a100" stroke-width="0.6" stroke-linejoin="round"/>
<polygon points="659.8,587.9 756.5,552.3 758.1,525.8 661.0,561.2" fill="#00ab00" stroke="#00ab00" stroke-width="0.6" stroke-linejoin="round"/>
<polygon points="661.0,561.2 758.1,525.8 728.0,501.3 631.5,535.9" fill="#00a000" stroke="#00a000" stroke-width="0.6" stroke-linejoin="round"/>
<polygon points="634.3,621.2 633.3,620.3 633.4,618.9 634.4,619.8" fill="#ba5921" stroke="#ba5921" stroke-width="0.6" stroke-linejoin="round"/>
<polygon points="634.3,621.2 801.9,558.8 802.0,557.4 634.4,619.8" fill="#be5e25" stroke="#be5e25" stroke-width="0.6" stroke-linejoin="round"/>
<polygon points="634.4,619.8 802.0,557.4 801.0,556.6 633.4,618.9" fill="#c98a2c" stroke="#c98a2c" stroke-width="0.6" stroke-linejoin="round"/>
<polygon points="670.9,604.9 659.5,595.0 661.0,561.2 672.5,571.0" fill="#00a100" stroke="#00a100" stroke-width="0.6" stroke-linejoin="round"/>
<polygon points="670.9,604.9 757.4,572.8 759.5,539.2 672.5,571.0" fill="#00ab00" stroke="#00ab00" stroke-width="0.6" stroke-linejoin="round"/>
<polygon points="672.5,571.0 759.5,539.2 747.8,529.6 661.0,561.2" fill="#00a000" stroke="#00a000" stroke-width="0.6" stroke-linejoin="round"/>
<polygon points="622.0,610.2 592.9,584.5 593.2,576.0 622.3,601.7" fill="#ba5921" stroke="#ba5921" stroke-width="0.6" stroke-linejoin="round"/>
<polygon points="622.0,610.2 624.9,609.2 625.2,600.7 622.3,601.7" fill="#be5e25" stroke="#be5e25" stroke-width="0.6" stroke-linejoin="round"/>
<polygon points="648.9,609.6 640.5,602.3 640.8,594.9 649.2,602.3" fill="#ba5921" stroke="#ba5921" stroke-width="0.6" stroke-linejoin="round"/>
<polygon points="648.9,609.6 667.9,602.6 668.2,595.2 649.2,602.3" fill="#be5e25" stroke="#be5e25" stroke-width="0.6" stroke-linejoin="round"/>
<polygon points="649.2,602.3 668.2,595.2 659.8,587.9 640.8,594.9" fill="#c06127" stroke="#c06127" stroke-width="0.6" stroke-linejoin="round"/>
<polygon points="649.5,601.3 666.5,595.0 658.8,588.3 641.8,594.5" fill="#c6a12d" stroke="#c6a12d" stroke-width="0.15" stroke-linejoin="round"/>
<polygon points="650.3,598.7 662.1,594.4 656.2,589.2 644.4,593.6" fill="#b5272d" stroke="#b5272d" stroke-width="0.15" stroke-linejoin="round"/>
<polygon points="657.6,599.2 618.0,564.6 618.6,546.6 658.4,580.9" fill="#ba5921" stroke="#ba5921" stroke-width="0.6" stroke-linejoin="round"/>
<polygon points="657.6,599.2 662.8,597.2 663.6,579.0 658.4,580.9" fill="#be5e25" stroke="#be5e25" stroke-width="0.6" stroke-linejoin="round"/>
<polygon points="658.4,580.9 618.6,546.6 618.6,545.7 658.4,580.1" fill="#c6a12d" stroke="#c6a12d" stroke-width="0.6" stroke-linejoin="round"/>
<polygon points="658.4,580.9 663.6,579.0 663.6,578.2 658.4,580.1" fill="#be5e25" stroke="#be5e25" stroke-width="0.6" stroke-linejoin="round"/>
<polygon points="658.4,580.1 663.6,578.2 623.8,543.9 618.6,545.7" fill="#c06127" stroke="#c06127" stroke-width="0.6" stroke-linejoin="round"/>
<polygon points="657.9,579.7 662.4,578.0 623.1,544.1 618.6,545.7" fill="#c6a12d" stroke="#c6a12d" stroke-width="0.15" stroke-linejoin="round"/>
<polygon points="625.2,600.7 596.1,575.0 596.9,548.3 626.1,573.9" fill="#00a100" stroke="#00a100" stroke-width="0.6" stroke-linejoin="round"/>
<polygon points="625.2,600.7 643.7,593.8 644.8,567.1 626.1,573.9" fill="#00ab00" stroke="#00ab00" stroke-width="0.6" stroke-linejoin="round"/>
<polygon points="626.1,573.9 644.8,567.1 615.4,541.7 596.9,548.3" fill="#00a000" stroke="#00a000" stroke-width="0.6" stroke-linejoin="round"/>
<polygon points="611.3,560.0 595.0,545.8 595.2,537.2 611.5,551.4" fill="#ba5921" stroke="#ba5921" stroke-width="0.6" stroke-linejoin="round"/>
<polygon points="611.3,560.0 778.3,499.6 778.9,491.2 611.5,551.4" fill="#be5e25" stroke="#be5e25" stroke-width="0.6" stroke-linejoin="round"/>
<polygon points="611.5,551.4 778.9,491.2 761.9,477.7 595.2,537.2" fill="#c06127" stroke="#c06127" stroke-width="0.6" stroke-linejoin="round"/>
<polygon points="612.6,551.0 777.9,491.5 761.7,478.6 596.9,537.4" fill="#c6a12d" stroke="#c6a12d" stroke-width="0.15" stroke-linejoin="round"/>
<polygon points="615.2,550.1 775.4,492.4 761.0,481.0 601.3,538.0" fill="#b5272d" stroke="#b5272d" stroke-width="0.15" stroke-linejoin="round"/>
<polygon points="778.5,517.5 763.1,505.1 763.7,496.7 779.1,509.0" fill="#ba5921" stroke="#ba5921" stroke-width="0.6" stroke-linejoin="round"/>
<polygon points="778.5,517.5 793.8,512.0 794.4,503.5 779.1,509.0" fill="#be5e25" stroke="#be5e25" stroke-width="0.6" stroke-linejoin="round"/>
<polygon points="779.1,509.0 794.4,503.5 778.9,491.2 763.7,496.7" fill="#c06127" stroke="#c06127" stroke-width="0.6" stroke-linejoin="round"/>
<polygon points="779.3,508.1 792.7,503.3 777.9,491.5 764.6,496.3" fill="#c6a12d" stroke="#c6a12d" stroke-width="0.15" stroke-linejoin="round"/>
<polygon points="780.0,505.7 788.3,502.7 775.4,492.4 767.1,495.4" fill="#b5272d" stroke="#b5272d" stroke-width="0.15" stroke-linejoin="round"/>
<polygon points="749.0,502.4 731.8,488.5 732.8,470.3 750.1,484.2" fill="#ba5921" stroke="#ba5921" stroke-width="0.6" stroke-linejoin="round"/>
<polygon points="749.0,502.4 754.1,500.6 755.2,482.4 750.1,484.2" fill="#be5e25" stroke="#be5e25" stroke-width="0.6" stroke-linejoin="round"/>
<polygon points="757.6,526.0 742.2,513.5 742.3,511.5 757.7,524.0" fill="#1414b4" stroke="#1414b4" stroke-width="0.6" stroke-linejoin="round"/>
<polygon points="757.7,524.0 778.6,516.4 763.2,504.0 742.3,511.5" fill="#4a75b0" stroke="#4a75b0" stroke-width="0.6" stroke-linejoin="round"/>
<polygon points="750.1,484.2 732.8,470.3 732.9,469.5 750.2,483.3" fill="#c6a12d" stroke="#c6a12d" stroke-width="0.6" stroke-linejoin="round"/>
<polygon points="750.1,484.2 755.2,482.4 755.2,481.5 750.2,483.3" fill="#be5e25" stroke="#be5e25" stroke-width="0.6" stroke-linejoin="round"/>
<polygon points="750.2,483.3 755.2,481.5 737.9,467.7 732.9,469.5" fill="#c06127" stroke="#c06127" stroke-width="0.6" stroke-linejoin="round"/>
<polygon points="749.7,482.9 754.0,481.4 737.2,468.0 732.9,469.5" fill="#c6a12d" stroke="#c6a12d" stroke-width="0.15" stroke-linejoin="round"/>
<polygon points="626.2,573.0 611.3,560.0 611.5,551.4 626.5,564.4" fill="#ba5921" stroke="#ba5921" stroke-width="0.6" stroke-linejoin="round"/>
<polygon points="626.2,573.0 757.6,525.1 758.1,516.6 626.5,564.4" fill="#be5e25" stroke="#be5e25" stroke-width="0.6" stroke-linejoin="round"/>
<polygon points="626.5,564.4 758.1,516.6 742.8,504.2 611.5,551.4" fill="#c06127" stroke="#c06127" stroke-width="0.6" stroke-linejoin="round"/>
<polygon points="626.8,563.4 756.4,516.4 742.5,505.1 613.3,551.6" fill="#c6a12d" stroke="#c6a12d" stroke-width="0.15" stroke-linejoin="round"/>
<polygon points="627.6,560.9 752.1,515.8 741.8,507.5 617.7,552.2" fill="#b5272d" stroke="#b5272d" stroke-width="0.15" stroke-linejoin="round"/>
<polygon points="622.3,601.7 593.2,576.0 594.0,549.4 623.2,574.9" fill="#00a100" stroke="#00a100" stroke-width="0.6" stroke-linejoin="round"/>
<polygon points="622.3,601.7 625.2,600.7 626.1,573.9 623.2,574.9" fill="#00ab00" stroke="#00ab00" stroke-width="0.6" stroke-linejoin="round"/>
<polygon points="623.2,574.9 626.1,573.9 596.9,548.3 594.0,549.4" fill="#00a000" stroke="#00a000" stroke-width="0.6" stroke-linejoin="round"/>
<polygon points="650.9,610.5 648.9,608.8 650.0,582.3 652.0,584.1" fill="#ba5921" stroke="#ba5921" stroke-width="0.6" stroke-linejoin="round"/>
<polygon points="650.9,610.5 670.0,603.5 671.2,577.0 652.0,584.1" fill="#be5e25" stroke="#be5e25" stroke-width="0.6" stroke-linejoin="round"/>
<polygon points="652.0,584.1 671.2,577.0 669.1,575.3 650.0,582.3" fill="#c6a12d" stroke="#c6a12d" stroke-width="0.6" stroke-linejoin="round"/>
<polygon points="633.4,618.9 622.0,608.8 623.2,574.9 634.6,584.9" fill="#00a100" stroke="#00a100" stroke-width="0.6" stroke-linejoin="round"/>
<polygon points="633.4,618.9 651.9,612.0 653.3,578.1 634.6,584.9" fill="#00ab00" stroke="#00ab00" stroke-width="0.6" stroke-linejoin="round"/>
<polygon points="634.6,584.9 653.3,578.1 641.8,568.1 623.2,574.9" fill="#00a000" stroke="#00a000" stroke-width="0.6" stroke-linejoin="round"/>
<polygon points="635.5,583.8 624.7,574.4 624.7,572.4 635.6,581.8" fill="#1414b4" stroke="#1414b4" stroke-width="0.6" stroke-linejoin="round"/>
<polygon points="635.5,583.8 800.8,523.3 800.9,521.3 635.6,581.8" fill="#1414b4" stroke="#1414b4" stroke-width="0.6" stroke-linejoin="round"/>
<polygon points="635.6,581.8 800.9,521.3 789.7,512.4 624.7,572.4" fill="#1414b4" stroke="#1414b4" stroke-width="0.6" stroke-linejoin="round"/>
<polygon points="636.2,579.9 797.5,520.9 787.8,513.1 626.8,571.6" fill="#4a75b0" stroke="#4a75b0" stroke-width="0.15" stroke-linejoin="round"/>
<polygon points="650.4,573.4 641.9,566.1 642.2,558.7 650.7,566.0" fill="#ba5921" stroke="#ba5921" stroke-width="0.6" stroke-linejoin="round"/>
<polygon points="650.4,573.4 669.5,566.4 669.9,559.0 650.7,566.0" fill="#be5e25" stroke="#be5e25" stroke-width="0.6" stroke-linejoin="round"/>
<polygon points="650.7,566.0 669.9,559.0 661.4,551.7 642.2,558.7" fill="#c06127" stroke="#c06127" stroke-width="0.6" stroke-linejoin="round"/>
<polygon points="651.0,565.0 668.1,558.7 660.3,552.1 643.2,558.3" fill="#c6a12d" stroke="#c6a12d" stroke-width="0.15" stroke-linejoin="round"/>
<polygon points="651.8,562.5 663.7,558.1 657.7,553.0 645.9,557.3" fill="#b5272d" stroke="#b5272d" stroke-width="0.15" stroke-linejoin="round"/>
<polygon points="659.1,562.9 619.2,528.6 619.8,510.3 659.9,544.4" fill="#ba5921" stroke="#ba5921" stroke-width="0.6" stroke-linejoin="round"/>
<polygon points="659.1,562.9 664.4,561.0 665.2,542.5 659.9,544.4" fill="#be5e25" stroke="#be5e25" stroke-width="0.6" stroke-linejoin="round"/>
<polygon points="659.9,544.4 619.8,510.3 619.9,509.5 660.0,543.5" fill="#c6a12d" stroke="#c6a12d" stroke-width="0.6" stroke-linejoin="round"/>
<polygon points="659.9,544.4 665.2,542.5 665.2,541.6 660.0,543.5" fill="#be5e25" stroke="#be5e25" stroke-width="0.6" stroke-linejoin="round"/>
<polygon points="660.0,543.5 665.2,541.6 625.1,507.6 619.9,509.5" fill="#c06127" stroke="#c06127" stroke-width="0.6" stroke-linejoin="round"/>
<polygon points="659.4,543.1 664.0,541.5 624.3,507.9 619.9,509.5" fill="#c6a12d" stroke="#c6a12d" stroke-width="0.15" stroke-linejoin="round"/>
</g>
<rect x="0" y="674.2" width="117" height="62.2" fill="#474747"/>
<rect x="57.8" y="677" width="56.2" height="56.3" fill="#222222"/>
<path d="M4.6,694.6H40.6V729.8H4.6ZM4.6,694.6L19.3,680.8H53.2L40.6,694.6M53.2,680.8V718.4L40.6,729.8" stroke="#f2f2f2" stroke-width="1.2" fill="none" stroke-linejoin="round"/>
<path d="M61.6,694.6L76.3,682H111.1L97.8,694.6ZM61.6,698.9H97.8L111.1,686.3M61.6,703.3H97.8L111.1,690.7M61.6,707.7H97.8L111.1,695.1M61.6,712.1H97.8L111.1,699.5M61.6,716.6H97.8L111.1,704.0M61.6,721.0H97.8L111.1,708.4M61.6,725.5H97.8L111.1,712.9M61.6,729.9H97.8L111.1,717.3" stroke="#f2f2f2" stroke-width="1.2" fill="none" stroke-linejoin="round"/>
<g id="LEGEND"></g>
<rect x="0" y="59.2" width="313.2" height="227.6" fill="#222222" fill-opacity="0.62"/>
<rect x="0" y="78.8" width="310.7" height="1" fill="#d8703c"/>
<rect x="0" y="252.6" width="310.7" height="1" fill="#d8703c"/>
<text x="2.5" y="75.0" font-size="10.6" fill="#ececec" textLength="57.1" lengthAdjust="spacingAndGlyphs">Feature type</text>
<text x="146.2" y="75.0" font-size="10.6" fill="#ececec" textLength="20.0" lengthAdjust="spacingAndGlyphs">Time</text>
<text x="173.5" y="75.0" font-size="10.6" fill="#ececec" textLength="51.7" lengthAdjust="spacingAndGlyphs">Percentage</text>
<text x="239.0" y="75.0" font-size="10.6" fill="#ececec" textLength="62.9" lengthAdjust="spacingAndGlyphs">Used filament</text>
<rect x="3" y="82.0" width="12.2" height="12" fill="#ffe64d"/>
<text x="20.3" y="91.8" font-size="10.6" fill="#ececec" textLength="44.9" lengthAdjust="spacingAndGlyphs">Perimeter</text>
<text x="145.7" y="91.8" font-size="10.6" fill="#ececec" textLength="19.3" lengthAdjust="spacingAndGlyphs">43m</text>
<rect x="173.6" y="82.6" width="26.6" height="10.8" fill="#ff7d38"/>
<text x="205.0" y="91.8" font-size="10.6" fill="#ececec" textLength="27.0" lengthAdjust="spacingAndGlyphs">25.0%</text>
<text x="239.0" y="91.8" font-size="10.6" fill="#ececec" textLength="30.2" lengthAdjust="spacingAndGlyphs">5.00 m</text>
<text x="275.3" y="91.8" font-size="10.6" fill="#ececec" textLength="32.3" lengthAdjust="spacingAndGlyphs">14.93 g</text>
<rect x="3" y="97.4" width="12.2" height="12" fill="#ff7d38"/>
<text x="20.3" y="107.2" font-size="10.6" fill="#ececec" textLength="85.5" lengthAdjust="spacingAndGlyphs">External perimeter</text>
<text x="145.7" y="107.2" font-size="10.6" fill="#ececec" textLength="19.3" lengthAdjust="spacingAndGlyphs">34m</text>
<rect x="173.6" y="98.0" width="21.1" height="10.8" fill="#ff7d38"/>
<text x="205.0" y="107.2" font-size="10.6" fill="#ececec" textLength="27.0" lengthAdjust="spacingAndGlyphs">19.8%</text>
<text x="239.0" y="107.2" font-size="10.6" fill="#ececec" textLength="30.2" lengthAdjust="spacingAndGlyphs">2.70 m</text>
<text x="275.3" y="107.2" font-size="10.6" fill="#ececec" textLength="26.9" lengthAdjust="spacingAndGlyphs">8.06 g</text>
<rect x="3" y="112.8" width="12.2" height="12" fill="#1f1fff"/>
<text x="20.3" y="122.6" font-size="10.6" fill="#ececec" textLength="92.8" lengthAdjust="spacingAndGlyphs">Overhang perimeter</text>
<text x="145.7" y="122.6" font-size="10.6" fill="#ececec" textLength="14.0" lengthAdjust="spacingAndGlyphs">2m</text>
<rect x="173.6" y="113.4" width="1.3" height="10.8" fill="#ff7d38"/>
<text x="205.0" y="122.6" font-size="10.6" fill="#ececec" textLength="21.2" lengthAdjust="spacingAndGlyphs">1.2%</text>
<text x="239.0" y="122.6" font-size="10.6" fill="#ececec" textLength="30.2" lengthAdjust="spacingAndGlyphs">0.18 m</text>
<text x="275.3" y="122.6" font-size="10.6" fill="#ececec" textLength="26.9" lengthAdjust="spacingAndGlyphs">0.55 g</text>
<rect x="3" y="128.2" width="12.2" height="12" fill="#b03029"/>
<text x="20.3" y="138.0" font-size="10.6" fill="#ececec" textLength="57.9" lengthAdjust="spacingAndGlyphs">Internal infill</text>
<text x="145.7" y="138.0" font-size="10.6" fill="#ececec" textLength="14.0" lengthAdjust="spacingAndGlyphs">3m</text>
<rect x="173.6" y="128.8" width="2.1" height="10.8" fill="#ff7d38"/>
<text x="205.0" y="138.0" font-size="10.6" fill="#ececec" textLength="21.2" lengthAdjust="spacingAndGlyphs">2.0%</text>
<text x="239.0" y="138.0" font-size="10.6" fill="#ececec" textLength="30.2" lengthAdjust="spacingAndGlyphs">0.24 m</text>
<text x="275.3" y="138.0" font-size="10.6" fill="#ececec" textLength="26.9" lengthAdjust="spacingAndGlyphs">0.72 g</text>
<rect x="3" y="143.6" width="12.2" height="12" fill="#9654cc"/>
<text x="20.3" y="153.4" font-size="10.6" fill="#ececec" textLength="43.7" lengthAdjust="spacingAndGlyphs">Solid infill</text>
<text x="145.7" y="153.4" font-size="10.6" fill="#ececec" textLength="19.3" lengthAdjust="spacingAndGlyphs">36m</text>
<rect x="173.6" y="144.2" width="22.6" height="10.8" fill="#ff7d38"/>
<text x="205.0" y="153.4" font-size="10.6" fill="#ececec" textLength="27.0" lengthAdjust="spacingAndGlyphs">21.2%</text>
<text x="239.0" y="153.4" font-size="10.6" fill="#ececec" textLength="30.2" lengthAdjust="spacingAndGlyphs">2.76 m</text>
<text x="275.3" y="153.4" font-size="10.6" fill="#ececec" textLength="26.9" lengthAdjust="spacingAndGlyphs">8.22 g</text>
<rect x="3" y="159.0" width="12.2" height="12" fill="#f04040"/>
<text x="20.3" y="168.8" font-size="10.6" fill="#ececec" textLength="63.0" lengthAdjust="spacingAndGlyphs">Top solid infill</text>
<text x="145.7" y="168.8" font-size="10.6" fill="#ececec" textLength="19.3" lengthAdjust="spacingAndGlyphs">10m</text>
<rect x="173.6" y="159.6" width="6.0" height="10.8" fill="#ff7d38"/>
<text x="205.0" y="168.8" font-size="10.6" fill="#ececec" textLength="21.2" lengthAdjust="spacingAndGlyphs">5.6%</text>
<text x="239.0" y="168.8" font-size="10.6" fill="#ececec" textLength="30.2" lengthAdjust="spacingAndGlyphs">0.53 m</text>
<text x="275.3" y="168.8" font-size="10.6" fill="#ececec" textLength="26.9" lengthAdjust="spacingAndGlyphs">1.57 g</text>
<rect x="3" y="174.4" width="12.2" height="12" fill="#4d80ba"/>
<text x="20.3" y="184.2" font-size="10.6" fill="#ececec" textLength="52.0" lengthAdjust="spacingAndGlyphs">Bridge infill</text>
<text x="145.7" y="184.2" font-size="10.6" fill="#ececec" textLength="19.3" lengthAdjust="spacingAndGlyphs">11m</text>
<rect x="173.6" y="175.0" width="6.7" height="10.8" fill="#ff7d38"/>
<text x="205.0" y="184.2" font-size="10.6" fill="#ececec" textLength="21.2" lengthAdjust="spacingAndGlyphs">6.3%</text>
<text x="239.0" y="184.2" font-size="10.6" fill="#ececec" textLength="30.2" lengthAdjust="spacingAndGlyphs">0.75 m</text>
<text x="275.3" y="184.2" font-size="10.6" fill="#ececec" textLength="26.9" lengthAdjust="spacingAndGlyphs">2.25 g</text>
<rect x="3" y="189.8" width="12.2" height="12" fill="#00ff00"/>
<text x="20.3" y="199.6" font-size="10.6" fill="#ececec" textLength="77.1" lengthAdjust="spacingAndGlyphs">Support material</text>
<text x="145.7" y="199.6" font-size="10.6" fill="#ececec" textLength="19.3" lengthAdjust="spacingAndGlyphs">27m</text>
<rect x="173.6" y="190.4" width="16.8" height="10.8" fill="#ff7d38"/>
<text x="205.0" y="199.6" font-size="10.6" fill="#ececec" textLength="27.0" lengthAdjust="spacingAndGlyphs">15.8%</text>
<text x="239.0" y="199.6" font-size="10.6" fill="#ececec" textLength="30.2" lengthAdjust="spacingAndGlyphs">1.57 m</text>
<text x="275.3" y="199.6" font-size="10.6" fill="#ececec" textLength="26.9" lengthAdjust="spacingAndGlyphs">4.68 g</text>
<rect x="3" y="205.2" width="12.2" height="12" fill="#008000"/>
<text x="20.3" y="215.0" font-size="10.6" fill="#ececec" textLength="119.9" lengthAdjust="spacingAndGlyphs">Support material interface</text>
<text x="145.7" y="215.0" font-size="10.6" fill="#ececec" textLength="14.0" lengthAdjust="spacingAndGlyphs">5m</text>
<rect x="173.6" y="205.8" width="3.0" height="10.8" fill="#ff7d38"/>
<text x="205.0" y="215.0" font-size="10.6" fill="#ececec" textLength="21.2" lengthAdjust="spacingAndGlyphs">2.8%</text>
<text x="239.0" y="215.0" font-size="10.6" fill="#ececec" textLength="30.2" lengthAdjust="spacingAndGlyphs">0.28 m</text>
<text x="275.3" y="215.0" font-size="10.6" fill="#ececec" textLength="26.9" lengthAdjust="spacingAndGlyphs">0.84 g</text>
<rect x="3" y="220.6" width="12.2" height="12" fill="#5ed194"/>
<text x="20.3" y="230.4" font-size="10.6" fill="#ececec" textLength="34.7" lengthAdjust="spacingAndGlyphs">Custom</text>
<text x="145.7" y="230.4" font-size="10.6" fill="#ececec" textLength="15.2" lengthAdjust="spacingAndGlyphs">27s</text>
<rect x="173.6" y="221.2" width="0.6" height="10.8" fill="#ff7d38" fill-opacity="0.45"/>
<text x="205.0" y="230.4" font-size="10.6" fill="#ececec" textLength="21.2" lengthAdjust="spacingAndGlyphs">0.3%</text>
<text x="239.0" y="230.4" font-size="10.6" fill="#ececec" textLength="30.2" lengthAdjust="spacingAndGlyphs">0.02 m</text>
<text x="275.3" y="230.4" font-size="10.6" fill="#ececec" textLength="26.9" lengthAdjust="spacingAndGlyphs">0.06 g</text>
<text x="2.5" y="248.4" font-size="10.6" fill="#ececec" textLength="114.7" lengthAdjust="spacingAndGlyphs">Estimated printing times:</text>
<text x="2.5" y="265.8" font-size="10.6" fill="#ececec" textLength="46.6" lengthAdjust="spacingAndGlyphs">First layer:</text>
<text x="53.3" y="265.8" font-size="10.6" fill="#ececec" textLength="14.1" lengthAdjust="spacingAndGlyphs">6m</text>
<text x="2.5" y="281.0" font-size="10.6" fill="#ececec" textLength="24.6" lengthAdjust="spacingAndGlyphs">Total:</text>
<text x="53.3" y="281.0" font-size="10.6" fill="#ececec" textLength="30.9" lengthAdjust="spacingAndGlyphs">2h52m</text>
<g><circle cx="5.8" cy="8" r="4.6" fill="#3a3532"/><path d="M2.6,11.2 A4.6,4.6 0 0 0 10.3,7.2 Q7,6.5 2.6,11.2Z" fill="#ee6a2a"/></g>
<text x="17.0" y="12.2" font-size="11.3" fill="#a3a3a3" textLength="261.1" lengthAdjust="spacingAndGlyphs">*2nd attempt of stack - PrusaSlicer-2.5.0 based on Slic3r</text>
<text x="4.4" y="30.9" font-size="11.3" fill="#7d7d7d" textLength="14.9" lengthAdjust="spacingAndGlyphs">File</text>
<text x="32.9" y="30.9" font-size="11.3" fill="#7d7d7d" textLength="16.7" lengthAdjust="spacingAndGlyphs">Edit</text>
<text x="63.4" y="30.9" font-size="11.3" fill="#7d7d7d" textLength="38.5" lengthAdjust="spacingAndGlyphs">Window</text>
<text x="115.6" y="30.9" font-size="11.3" fill="#7d7d7d" textLength="20.7" lengthAdjust="spacingAndGlyphs">View</text>
<text x="150.0" y="30.9" font-size="11.3" fill="#7d7d7d" textLength="63.6" lengthAdjust="spacingAndGlyphs">Configuration</text>
<text x="227.7" y="30.9" font-size="11.3" fill="#7d7d7d" textLength="20.4" lengthAdjust="spacingAndGlyphs">Help</text>
<rect x="0" y="35" width="945" height="1" fill="#f4f4f4"/>
<rect x="0" y="36.8" width="62" height="21" fill="#e6e1df"/>
<rect x="64.8" y="36.8" width="97.2" height="21" fill="#e5e5e5"/>
<rect x="164.7" y="36.8" width="115.8" height="21" fill="#e5e5e5"/>
<rect x="283.4" y="36.8" width="106.2" height="21" fill="#e5e5e5"/>
<rect x="0" y="56.6" width="945" height="1.3" fill="#f7e6de"/>
<rect x="313" y="59.1" width="536.5" height="1" fill="#e9b9a2"/>
<rect x="0" y="57.8" width="945" height="1.4" fill="#b9633d"/>
<rect x="0" y="56" width="62" height="2.6" fill="#f0600f"/>
<text x="23.8" y="50.6" font-size="11.3" fill="#2e2e2e" textLength="25.1" lengthAdjust="spacingAndGlyphs">Plater</text>
<text x="87.0" y="50.6" font-size="11.3" fill="#2e2e2e" textLength="62.3" lengthAdjust="spacingAndGlyphs">Print Settings</text>
<text x="188.0" y="50.6" font-size="11.3" fill="#2e2e2e" textLength="79.3" lengthAdjust="spacingAndGlyphs">Filament Settings</text>
<text x="306.5" y="50.6" font-size="11.3" fill="#2e2e2e" textLength="70.1" lengthAdjust="spacingAndGlyphs">Printer Settings</text>
<rect x="6.3" y="40.4" width="11" height="11" rx="1.5" fill="none" stroke="#8a8a8a" stroke-width="1"/><circle cx="11.8" cy="45.9" r="3.9" fill="#ee6a1f"/>
<polygon points="74.29,40.25 75.42,40.03 76.45,41.32 77.34,41.50 78.78,40.70 79.74,41.34 79.56,42.98 80.06,43.73 81.65,44.19 81.87,45.32 80.58,46.35 80.40,47.24 81.20,48.68 80.56,49.64 78.92,49.46 78.17,49.96 77.71,51.55 76.58,51.77 75.55,50.48 74.66,50.30 73.22,51.10 72.26,50.46 72.44,48.82 71.94,48.07 70.35,47.61 70.13,46.48 71.42,45.45 71.60,44.56 70.80,43.12 71.44,42.16 73.08,42.34 73.83,41.84" fill="#fff" stroke="#7f7f7f" stroke-width="0.9"/><circle cx="76" cy="45.9" r="3" fill="#fff" stroke="#ee8a55" stroke-width="1.1"/>
<rect x="170.2" y="40.3" width="1.3" height="11.6" fill="#8a8a8a"/><rect x="180.9" y="40.3" width="1.3" height="11.6" fill="#8a8a8a"/>
<rect x="171.6" y="41" width="9.2" height="10.2" fill="#f08a4c"/>
<rect x="173.6" y="41" width="0.6" height="10.2" fill="#f6b48c"/>
<rect x="176.2" y="41" width="0.6" height="10.2" fill="#f6b48c"/>
<rect x="178.8" y="41" width="0.6" height="10.2" fill="#f6b48c"/>
<rect x="289.1" y="40.2" width="11.4" height="11.2" fill="#f4f4f4" stroke="#8a8a8a" stroke-width="1.1"/><rect x="289.1" y="44.4" width="11.4" height="1" fill="#8a8a8a"/><circle cx="291.7" cy="43.6" r="1.7" fill="#ee6a1f"/>
<rect x="849.5" y="59" width="1" height="677.3" fill="#e8e8e8"/>
<rect x="897.1" y="70" width="1.5" height="688" fill="#e8915f"/>
<text x="913.0" y="87.1" font-size="10.8" fill="#b5b5b5" textLength="24.9" lengthAdjust="spacingAndGlyphs">23.00</text>
<text x="913.0" y="110.1" font-size="10.8" fill="#b5b5b5" textLength="24.9" lengthAdjust="spacingAndGlyphs">22.00</text>
<text x="913.0" y="133.1" font-size="10.8" fill="#b5b5b5" textLength="24.9" lengthAdjust="spacingAndGlyphs">21.00</text>
<text x="913.0" y="156.1" font-size="10.8" fill="#b5b5b5" textLength="24.9" lengthAdjust="spacingAndGlyphs">20.00</text>
<text x="913.0" y="179.0" font-size="10.8" fill="#b5b5b5" textLength="24.9" lengthAdjust="spacingAndGlyphs">19.00</text>
<text x="913.0" y="201.8" font-size="10.8" fill="#b5b5b5" textLength="24.9" lengthAdjust="spacingAndGlyphs">18.00</text>
<text x="913.0" y="224.7" font-size="10.8" fill="#b5b5b5" textLength="24.9" lengthAdjust="spacingAndGlyphs">17.00</text>
<text x="913.0" y="247.7" font-size="10.8" fill="#b5b5b5" textLength="24.9" lengthAdjust="spacingAndGlyphs">16.00</text>
<text x="913.0" y="270.2" font-size="10.8" fill="#b5b5b5" textLength="24.9" lengthAdjust="spacingAndGlyphs">15.00</text>
<text x="913.0" y="292.9" font-size="10.8" fill="#b5b5b5" textLength="24.9" lengthAdjust="spacingAndGlyphs">14.00</text>
<text x="913.0" y="315.8" font-size="10.8" fill="#b5b5b5" textLength="24.9" lengthAdjust="spacingAndGlyphs">12.60</text>
<text x="913.0" y="329.7" font-size="10.8" fill="#b5b5b5" textLength="24.9" lengthAdjust="spacingAndGlyphs">11.86</text>
<text x="913.0" y="347.8" font-size="10.8" fill="#b5b5b5" textLength="24.9" lengthAdjust="spacingAndGlyphs">10.87</text>
<text x="913.0" y="379.8" font-size="10.8" fill="#b5b5b5" textLength="24.9" lengthAdjust="spacingAndGlyphs">10.00</text>
<text x="913.0" y="421.0" font-size="10.8" fill="#b5b5b5" textLength="19.4" lengthAdjust="spacingAndGlyphs">9.00</text>
<text x="913.0" y="457.4" font-size="10.8" fill="#b5b5b5" textLength="19.4" lengthAdjust="spacingAndGlyphs">8.00</text>
<text x="913.0" y="498.5" font-size="10.8" fill="#b5b5b5" textLength="19.4" lengthAdjust="spacingAndGlyphs">7.00</text>
<text x="913.0" y="540.2" font-size="10.8" fill="#b5b5b5" textLength="19.4" lengthAdjust="spacingAndGlyphs">6.00</text>
<text x="913.0" y="581.0" font-size="10.8" fill="#b5b5b5" textLength="19.4" lengthAdjust="spacingAndGlyphs">5.00</text>
<text x="913.0" y="617.7" font-size="10.8" fill="#b5b5b5" textLength="19.4" lengthAdjust="spacingAndGlyphs">4.00</text>
<text x="913.0" y="659.2" font-size="10.8" fill="#b5b5b5" textLength="19.4" lengthAdjust="spacingAndGlyphs">3.00</text>
<text x="913.0" y="700.1" font-size="10.8" fill="#b5b5b5" textLength="19.4" lengthAdjust="spacingAndGlyphs">2.00</text>
<text x="913.0" y="736.0" font-size="10.8" fill="#b5b5b5" textLength="19.4" lengthAdjust="spacingAndGlyphs">1.00</text>
<path d="M891.2,74.0h2M903.6,74.0h1.2M891.2,78.6h2M903.6,78.6h1.2M891.2,83.2h2M903.6,83.2h1.2M891.2,87.8h2M903.6,87.8h1.2M891.2,92.4h2M903.6,92.4h1.2M891.2,97.0h2M903.6,97.0h1.2M891.2,101.6h2M903.6,101.6h1.2M891.2,106.2h2M903.6,106.2h1.2M891.2,110.8h2M903.6,110.8h1.2M891.2,115.4h2M903.6,115.4h1.2M891.2,120.0h2M903.6,120.0h1.2M891.2,124.6h2M903.6,124.6h1.2M891.2,129.2h2M903.6,129.2h1.2M891.2,133.8h2M903.6,133.8h1.2M891.2,138.4h2M903.6,138.4h1.2M891.2,143.0h2M903.6,143.0h1.2M891.2,147.6h2M903.6,147.6h1.2M891.2,152.2h2M903.6,152.2h1.2M891.2,156.8h2M903.6,156.8h1.2M891.2,161.4h2M903.6,161.4h1.2M891.2,166.0h2M903.6,166.0h1.2M891.2,170.6h2M903.6,170.6h1.2M891.2,175.2h2M903.6,175.2h1.2M891.2,179.8h2M903.6,179.8h1.2M891.2,184.4h2M903.6,184.4h1.2M891.2,189.0h2M903.6,189.0h1.2M891.2,193.6h2M903.6,193.6h1.2M891.2,198.2h2M903.6,198.2h1.2M891.2,202.8h2M903.6,202.8h1.2M891.2,207.4h2M903.6,207.4h1.2M891.2,212.0h2M903.6,212.0h1.2M891.2,216.6h2M903.6,216.6h1.2M891.2,221.2h2M903.6,221.2h1.2M891.2,225.8h2M903.6,225.8h1.2M891.2,230.4h2M903.6,230.4h1.2M891.2,235.0h2M903.6,235.0h1.2M891.2,239.6h2M903.6,239.6h1.2M891.2,244.2h2M903.6,244.2h1.2M891.2,248.8h2M903.6,248.8h1.2M891.2,253.4h2M903.6,253.4h1.2M891.2,258.0h2M903.6,258.0h1.2M891.2,262.6h2M903.6,262.6h1.2M891.2,267.2h2M903.6,267.2h1.2M891.2,271.8h2M903.6,271.8h1.2M891.2,276.4h2M903.6,276.4h1.2M891.2,281.0h2M903.6,281.0h1.2M891.2,285.6h2M903.6,285.6h1.2M891.2,290.2h2M903.6,290.2h1.2M891.2,294.8h2M903.6,294.8h1.2M891.2,299.4h2M903.6,299.4h1.2M891.2,304.0h2M903.6,304.0h1.2M891.2,308.6h2M903.6,308.6h1.2M891.2,313.2h2M903.6,313.2h1.2M891.2,317.8h2M903.6,317.8h1.2M891.2,322.4h2M903.6,322.4h1.2M891.2,327.0h2M903.6,327.0h1.2M891.2,331.6h2M903.6,331.6h1.2M891.2,336.2h2M903.6,336.2h1.2M891.2,340.8h2M903.6,340.8h1.2M891.2,345.4h2M903.6,345.4h1.2M891.2,350.0h2M903.6,350.0h1.2M891.2,354.6h2M903.6,354.6h1.2M891.2,359.2h2M903.6,359.2h1.2M891.2,363.8h2M903.6,363.8h1.2M891.2,368.4h2M903.6,368.4h1.2M891.2,373.0h2M903.6,373.0h1.2M891.2,377.6h2M903.6,377.6h1.2M891.2,382.2h2M903.6,382.2h1.2M891.2,386.8h2M903.6,386.8h1.2M891.2,391.4h2M903.6,391.4h1.2M891.2,396.0h2M903.6,396.0h1.2M891.2,400.6h2M903.6,400.6h1.2M891.2,405.2h2M903.6,405.2h1.2M891.2,409.8h2M903.6,409.8h1.2M891.2,414.4h2M903.6,414.4h1.2M891.2,419.0h2M903.6,419.0h1.2M891.2,423.6h2M903.6,423.6h1.2M891.2,428.2h2M903.6,428.2h1.2M891.2,432.8h2M903.6,432.8h1.2M891.2,437.4h2M903.6,437.4h1.2M891.2,442.0h2M903.6,442.0h1.2M891.2,446.6h2M903.6,446.6h1.2M891.2,451.2h2M903.6,451.2h1.2M891.2,455.8h2M903.6,455.8h1.2M891.2,460.4h2M903.6,460.4h1.2M891.2,465.0h2M903.6,465.0h1.2M891.2,469.6h2M903.6,469.6h1.2M891.2,474.2h2M903.6,474.2h1.2M891.2,478.8h2M903.6,478.8h1.2M891.2,483.4h2M903.6,483.4h1.2M891.2,488.0h2M903.6,488.0h1.2M891.2,492.6h2M903.6,492.6h1.2M891.2,497.2h2M903.6,497.2h1.2M891.2,501.8h2M903.6,501.8h1.2M891.2,506.4h2M903.6,506.4h1.2M891.2,511.0h2M903.6,511.0h1.2M891.2,515.6h2M903.6,515.6h1.2M891.2,520.2h2M903.6,520.2h1.2M891.2,524.8h2M903.6,524.8h1.2M891.2,529.4h2M903.6,529.4h1.2M891.2,534.0h2M903.6,534.0h1.2M891.2,538.6h2M903.6,538.6h1.2M891.2,543.2h2M903.6,543.2h1.2M891.2,547.8h2M903.6,547.8h1.2M891.2,552.4h2M903.6,552.4h1.2M891.2,557.0h2M903.6,557.0h1.2M891.2,561.6h2M903.6,561.6h1.2M891.2,566.2h2M903.6,566.2h1.2M891.2,570.8h2M903.6,570.8h1.2M891.2,575.4h2M903.6,575.4h1.2M891.2,580.0h2M903.6,580.0h1.2M891.2,584.6h2M903.6,584.6h1.2M891.2,589.2h2M903.6,589.2h1.2M891.2,593.8h2M903.6,593.8h1.2M891.2,598.4h2M903.6,598.4h1.2M891.2,603.0h2M903.6,603.0h1.2M891.2,607.6h2M903.6,607.6h1.2M891.2,612.2h2M903.6,612.2h1.2M891.2,616.8h2M903.6,616.8h1.2M891.2,621.4h2M903.6,621.4h1.2M891.2,626.0h2M903.6,626.0h1.2M891.2,630.6h2M903.6,630.6h1.2M891.2,635.2h2M903.6,635.2h1.2M891.2,639.8h2M903.6,639.8h1.2M891.2,644.4h2M903.6,644.4h1.2M891.2,649.0h2M903.6,649.0h1.2M891.2,653.6h2M903.6,653.6h1.2M891.2,658.2h2M903.6,658.2h1.2M891.2,662.8h2M903.6,662.8h1.2M891.2,667.4h2M903.6,667.4h1.2M891.2,672.0h2M903.6,672.0h1.2M891.2,676.6h2M903.6,676.6h1.2M891.2,681.2h2M903.6,681.2h1.2M891.2,685.8h2M903.6,685.8h1.2M891.2,690.4h2M903.6,690.4h1.2M891.2,695.0h2M903.6,695.0h1.2M891.2,699.6h2M903.6,699.6h1.2M891.2,704.2h2M903.6,704.2h1.2M891.2,708.8h2M903.6,708.8h1.2M891.2,713.4h2M903.6,713.4h1.2M891.2,718.0h2M903.6,718.0h1.2M891.2,722.6h2M903.6,722.6h1.2M891.2,727.2h2M903.6,727.2h1.2M891.2,731.8h2M903.6,731.8h1.2M891.2,736.4h2M903.6,736.4h1.2M891.2,741.0h2M903.6,741.0h1.2M891.2,745.6h2M903.6,745.6h1.2M891.2,750.2h2M903.6,750.2h1.2" stroke="#d4d4d4" stroke-width="0.8" fill="none"/>
<path d="M889,83.4h4M903.6,83.4h3M889,106.4h4M903.6,106.4h3M889,129.4h4M903.6,129.4h3M889,152.4h4M903.6,152.4h3M889,175.3h4M903.6,175.3h3M889,198.1h4M903.6,198.1h3M889,221.0h4M903.6,221.0h3M889,244.0h4M903.6,244.0h3M889,266.5h4M903.6,266.5h3M889,289.2h4M903.6,289.2h3M889,312.1h4M903.6,312.1h3M889,326.0h4M903.6,326.0h3M889,344.1h4M903.6,344.1h3M889,376.1h4M903.6,376.1h3M889,417.3h4M903.6,417.3h3M889,453.7h4M903.6,453.7h3M889,494.8h4M903.6,494.8h3M889,536.5h4M903.6,536.5h3M889,577.3h4M903.6,577.3h3M889,614.0h4M903.6,614.0h3M889,655.5h4M903.6,655.5h3M889,696.4h4M903.6,696.4h3M889,732.3h4M903.6,732.3h3" stroke="#b9b9b9" stroke-width="1" fill="none"/>
<path d="M884,70.1H911.5" stroke="#e8915f" stroke-width="1"/>
<path d="M891.8,70.1L896.3,64.2H899.4L903.9,70.1Z" fill="#ed6b21"/>
<text x="857.8" y="68.2" font-size="10.8" fill="#3c3c3c" textLength="24.7" lengthAdjust="spacingAndGlyphs">23.60</text>
<text x="857.8" y="83.0" font-size="10.8" fill="#3c3c3c" textLength="22.8" lengthAdjust="spacingAndGlyphs">(151)</text>
<polygon points="920.5,64.3 925.6,67.2 925.6,73.2 920.5,76.1 915.4,73.2 915.4,67.2" fill="#ed6b21" stroke="#ed6b21" stroke-width="0.8" stroke-linejoin="round"/><path d="M917.6,70.2h5.8M920.5,67.3v5.8" stroke="#fff" stroke-width="1.7"/>
<path d="M891.7,756.2H904L899.3,761.6H896.4Z" fill="#ed6b21"/>
<text x="913.0" y="751.8" font-size="10.8" fill="#3c3c3c" textLength="19.5" lengthAdjust="spacingAndGlyphs">0.20</text>
<text x="913.0" y="767.0" font-size="10.8" fill="#3c3c3c" textLength="11.2" lengthAdjust="spacingAndGlyphs">(1)</text>
<rect x="892.6" y="771.6" width="10.8" height="6.6" rx="0.8" fill="#ed6b21"/><path d="M894.4,771.6v-2.2a2.6,2.6 0 0 1 5.2,0" fill="none" stroke="#ed6b21" stroke-width="1.5"/><path d="M897.2,773.6l2.2,1.3l-2.2,1.3z" fill="#fff"/>
<polygon points="936.66,766.26 937.81,766.03 938.87,767.22 939.79,767.41 941.23,766.71 942.21,767.36 942.11,768.95 942.63,769.74 944.14,770.26 944.37,771.41 943.18,772.47 942.99,773.39 943.69,774.83 943.04,775.81 941.45,775.71 940.66,776.23 940.14,777.74 938.99,777.97 937.93,776.78 937.01,776.59 935.57,777.29 934.59,776.64 934.69,775.05 934.17,774.26 932.66,773.74 932.43,772.59 933.62,771.53 933.81,770.61 933.11,769.17 933.76,768.19 935.35,768.29 936.14,767.77" fill="#fff" stroke="#8a8a8a" stroke-width="0.9"/><circle cx="938.4" cy="772" r="3.1" fill="#fff" stroke="#ee8a55" stroke-width="1.1"/>
<text x="1.2" y="763.2" font-size="11.3" fill="#1a1a1a" textLength="21.2" lengthAdjust="spacingAndGlyphs">View</text>
<rect x="25.6" y="749.9" width="91.6" height="18.3" fill="#fff" stroke="#9b9b9b" stroke-width="1"/>
<text x="28.4" y="763.2" font-size="11.3" fill="#1a1a1a" textLength="57.1" lengthAdjust="spacingAndGlyphs">Feature type</text>
<path d="M106.6,757.2l3,3l3,-3" fill="none" stroke="#5a5a5a" stroke-width="0.9"/>
<text x="123.8" y="763.2" font-size="11.3" fill="#1a1a1a" textLength="25.7" lengthAdjust="spacingAndGlyphs">Show</text>
<rect x="152.9" y="749.9" width="183.4" height="18.3" fill="#efefef" stroke="#8e8e8e" stroke-width="1"/>
<text x="155.6" y="763.2" font-size="11.3" fill="#1a1a1a" textLength="37.8" lengthAdjust="spacingAndGlyphs">Options</text>
<path d="M324.6,757.2l3,3l3,-3" fill="none" stroke="#5a5a5a" stroke-width="0.9"/>
<rect x="349" y="758" width="491" height="1.3" fill="#ed6b21"/>
<path d="M344.3,758.6L349.2,752.6Q350.2,752.6 350.2,753.6V763.6Q350.2,764.6 349.2,764.6Z" fill="#ed6b21"/>
<path d="M845,758.6L840.1,752.6Q839.1,752.6 839.1,753.6V763.6Q839.1,764.6 840.1,764.6Z" fill="#ed6b21"/>
<text x="352.5" y="778.0" font-size="10.8" fill="#2a2a2a" textLength="34.1" lengthAdjust="spacingAndGlyphs">100400</text>
<text x="803.1" y="748.1" font-size="10.8" fill="#2a2a2a" textLength="34.7" lengthAdjust="spacingAndGlyphs">100450</text>
<rect x="0" y="780.6" width="945" height="14.4" fill="#f3f3f3"/>
<rect x="0" y="780.6" width="945" height="1" fill="#dddddd"/>
<path d="M27,795L30.5,792L33,795Z" fill="#f2a33a"/>
<text x="45" y="800.2" font-size="12.2" fill="#1c1c1c" textLength="19.4" lengthAdjust="spacingAndGlyphs">44°F</text>
<rect x="387" y="792.3" width="9.6" height="4" fill="#35a0e4"/><rect x="397.8" y="792.3" width="9.6" height="4" fill="#2b8fdc"/>
<rect x="423.7" y="789.8" width="80" height="12" rx="6" fill="#fcfcfc"/>
<rect x="528.5" y="793" width="3" height="3" fill="#d8d8d8"/>
<circle cx="569" cy="799.0" r="7.3" fill="#a394d4"/>
<circle cx="608.2" cy="800.5" r="8.8" fill="#e0402f"/>
<circle cx="880.6" cy="800.9000000000001" r="9.2" fill="#e24a52"/>
<path d="M641.6,795L647.7,791.8L653.9,795Z" fill="#1f78c8"/>
<rect x="675" y="792.4" width="9" height="4" rx="1" fill="#f0b429"/>
<rect x="718" y="792.2" width="13.7" height="4" rx="1.5" fill="#7d8288"/>
<rect x="753" y="793.6" width="21.7" height="3" fill="#c9ccd0"/>
<circle cx="802" cy="797.5" r="6" fill="#ffffff"/>
<rect x="825.3" y="785.8" width="33.7" height="14" rx="3" fill="#fbfbfb" stroke="#e9e9e9" stroke-width="0.6"/>
<rect x="833" y="792.4" width="2.2" height="3" fill="#d83a2a"/><rect x="836.4" y="792.4" width="2.2" height="3" fill="#d83a2a"/><rect x="839.8" y="792.4" width="2.2" height="3" fill="#d83a2a"/>
<circle cx="922" cy="798" r="6" fill="#ffffff"/>
</svg>

</body></html>
